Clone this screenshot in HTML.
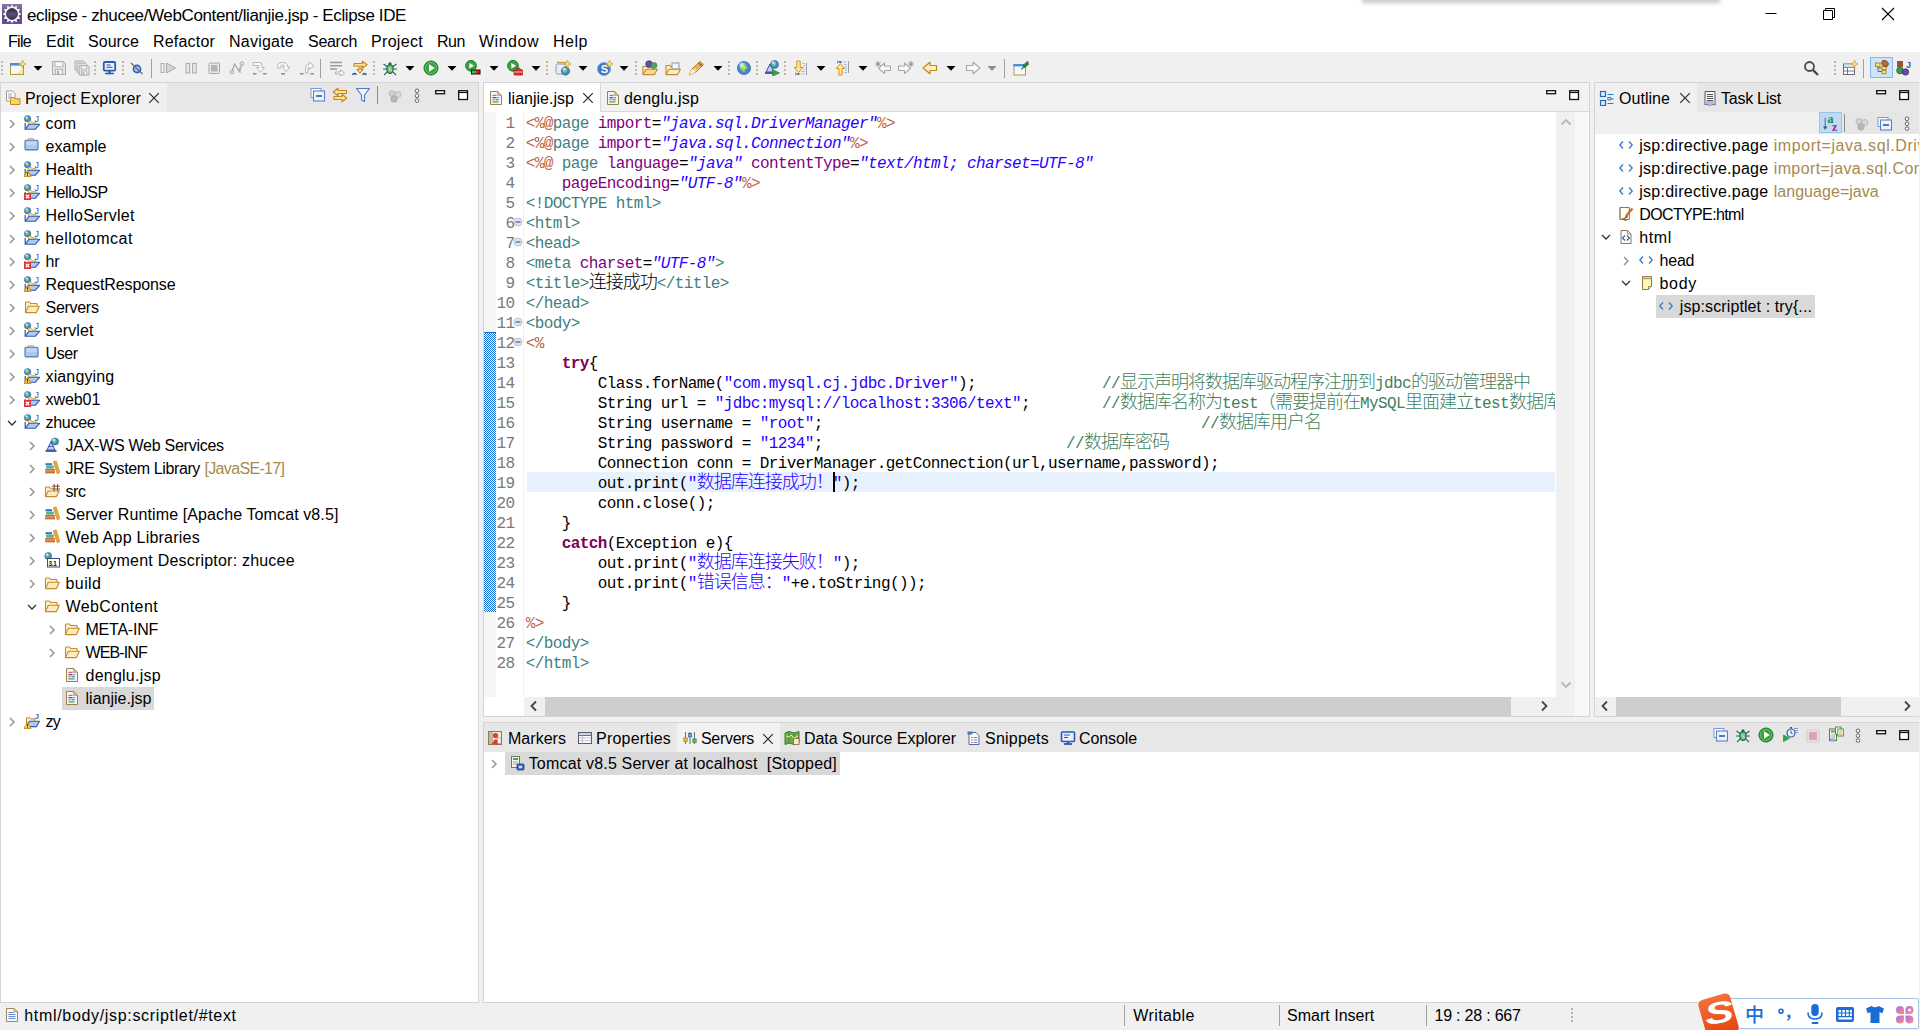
<!DOCTYPE html>
<html lang="zh"><head><meta charset="utf-8"><title>eclipse - zhucee/WebContent/lianjie.jsp - Eclipse IDE</title>
<style>

html,body{margin:0;padding:0}
body{width:1920px;height:1030px;overflow:hidden;position:relative;background:#f0f0f0;font-family:"Liberation Sans","Noto Sans CJK SC",sans-serif;color:#000}
.t{position:absolute;white-space:pre;line-height:20px;height:20px;color:#000}
.code{position:absolute;left:527px;top:113px;margin:0;font-family:"Liberation Mono","Noto Sans CJK SC",monospace;font-size:16px;letter-spacing:-0.6px;line-height:20px;white-space:pre;color:#000}
.code i{font-style:italic;color:#2a00ff}
.code .d{color:#bf5f3f}.code .g{color:#3f7f7f}.code .a{color:#7f007f}.code .s{color:#2a00ff}
.code .k{color:#7f0055;font-weight:bold}.code .c{color:#3f7f5f}.code .z{font-size:18px;line-height:1px;letter-spacing:-1px;font-weight:300;position:relative;top:-0.5px}
.code div{height:20px}
.ln{position:absolute;left:484px;top:114px;width:30.6px;text-align:right;font-family:"Liberation Mono",monospace;font-size:16px;letter-spacing:-0.6px;line-height:20px;color:#787878}
.ln div{height:20px}

</style></head>
<body>
<div style="position:absolute;left:0px;top:0px;width:1920px;height:52px;background:#fff;"></div>
<div style="position:absolute;left:0px;top:52px;width:1920px;height:31px;background:#f0f0f0;"></div>
<div style="position:absolute;left:1363px;top:-2px;width:356px;height:4px;background:#d4d4d4;box-shadow:0 0 4px 1px rgba(0,0,0,.22)"></div>
<svg style="position:absolute;left:2px;top:4px" width="20" height="20" viewBox="0 0 20 20"><defs><linearGradient id="lg" x1="0" y1="0" x2="0" y2="1"><stop offset="0" stop-color="#8a78a8"/><stop offset=".5" stop-color="#5a4888"/><stop offset="1" stop-color="#6a48a8"/></linearGradient><linearGradient id="lg2" x1="0" y1="0" x2="0" y2="1"><stop offset="0" stop-color="#2a2840"/><stop offset=".5" stop-color="#5a5080"/><stop offset="1" stop-color="#3a3058"/></linearGradient></defs><rect width="20" height="20" fill="url(#lg)"/><path d="M10.00 0.40L11.79 3.34L14.80 1.69L14.88 5.12L18.31 5.20L16.66 8.21L19.60 10.00L16.66 11.79L18.31 14.80L14.88 14.88L14.80 18.31L11.79 16.66L10.00 19.60L8.21 16.66L5.20 18.31L5.12 14.88L1.69 14.80L3.34 11.79L0.40 10.00L3.34 8.21L1.69 5.20L5.12 5.12L5.20 1.69L8.21 3.34z" fill="#f4f4f4"/><circle cx="10" cy="10" r="5.4" fill="url(#lg2)" stroke="#2a2838" stroke-width=".9"/></svg>
<span class="t" id="t0" style="left:27px;top:5.5px;font-size:17px;letter-spacing:-0.385px;">eclipse - zhucee/WebContent/lianjie.jsp - Eclipse IDE</span>
<span class="t" id="t1" style="left:8px;top:32px;font-size:16px;letter-spacing:-0.695px;">File</span>
<span class="t" id="t2" style="left:46px;top:32px;font-size:16px;letter-spacing:0.105px;">Edit</span>
<span class="t" id="t3" style="left:88px;top:32px;font-size:16px;letter-spacing:0.049px;">Source</span>
<span class="t" id="t4" style="left:153px;top:32px;font-size:16px;letter-spacing:0.191px;">Refactor</span>
<span class="t" id="t5" style="left:229px;top:32px;font-size:16px;letter-spacing:0.230px;">Navigate</span>
<span class="t" id="t6" style="left:308px;top:32px;font-size:16px;letter-spacing:-0.284px;">Search</span>
<span class="t" id="t7" style="left:371px;top:32px;font-size:16px;letter-spacing:0.315px;">Project</span>
<span class="t" id="t8" style="left:437px;top:32px;font-size:16px;letter-spacing:-0.453px;">Run</span>
<span class="t" id="t9" style="left:479px;top:32px;font-size:16px;letter-spacing:0.516px;">Window</span>
<span class="t" id="t10" style="left:553px;top:32px;font-size:16px;letter-spacing:0.523px;">Help</span>
<svg style="position:absolute;left:1760px;top:4px" width="150" height="22" viewBox="0 0 150 22"><g fill="none" stroke="#000" stroke-width="1"><path d="M5.5 9.5h11"/><path d="M63.5 6.5h9v9h-9z"/><path d="M65.5 6.500v-2h9v9h-2"/><path d="M122 4l12 12M134 4l-12 12" stroke-width="1.1"/></g></svg>
<div style="position:absolute;left:1px;top:61px;width:2px;height:16px;background:transparent;background-image:linear-gradient(#c6b89e 50%,transparent 50%);background-size:2px 4px"></div>
<div style="position:absolute;left:94px;top:61px;width:2px;height:16px;background:transparent;background-image:linear-gradient(#c6b89e 50%,transparent 50%);background-size:2px 4px"></div>
<div style="position:absolute;left:122px;top:61px;width:2px;height:16px;background:transparent;background-image:linear-gradient(#c6b89e 50%,transparent 50%);background-size:2px 4px"></div>
<div style="position:absolute;left:373px;top:61px;width:2px;height:16px;background:transparent;background-image:linear-gradient(#c6b89e 50%,transparent 50%);background-size:2px 4px"></div>
<div style="position:absolute;left:546px;top:61px;width:2px;height:16px;background:transparent;background-image:linear-gradient(#c6b89e 50%,transparent 50%);background-size:2px 4px"></div>
<div style="position:absolute;left:635px;top:61px;width:2px;height:16px;background:transparent;background-image:linear-gradient(#c6b89e 50%,transparent 50%);background-size:2px 4px"></div>
<div style="position:absolute;left:728px;top:61px;width:2px;height:16px;background:transparent;background-image:linear-gradient(#c6b89e 50%,transparent 50%);background-size:2px 4px"></div>
<div style="position:absolute;left:756px;top:61px;width:2px;height:16px;background:transparent;background-image:linear-gradient(#c6b89e 50%,transparent 50%);background-size:2px 4px"></div>
<div style="position:absolute;left:784px;top:61px;width:2px;height:16px;background:transparent;background-image:linear-gradient(#c6b89e 50%,transparent 50%);background-size:2px 4px"></div>
<div style="position:absolute;left:1834px;top:61px;width:2px;height:16px;background:transparent;background-image:linear-gradient(#c6b89e 50%,transparent 50%);background-size:2px 4px"></div>
<div style="position:absolute;left:151px;top:59px;width:1px;height:19px;background:#a0a0a0;"></div>
<div style="position:absolute;left:320px;top:59px;width:1px;height:19px;background:#a0a0a0;"></div>
<div style="position:absolute;left:1004px;top:59px;width:1px;height:19px;background:#a0a0a0;"></div>
<div style="position:absolute;left:1863px;top:59px;width:1px;height:19px;background:#a0a0a0;"></div>
<svg style="position:absolute;left:10px;top:60px" width="16" height="16" viewBox="0 0 16 16"><rect x="0.5" y="3.500" width="13" height="11" fill="#f4f9ff" stroke="#b8963c" stroke-width="1"/><rect x="0" y="3" width="14" height="2.600" fill="#4a90d8"/><path d="M2 14q9-1 11-8v8z" fill="#f6e6a8"/><path d="M12.5 0l1.1 2.9 2.9 1.1-2.9 1.1-1.1 2.9-1.1-2.9-2.9-1.1 2.9-1.1z" fill="#fbe27a" stroke="#c89a20" stroke-width=".7" stroke-linejoin="round"/></svg>
<svg style="position:absolute;left:51px;top:60px" width="16" height="16" viewBox="0 0 16 16"><path d="M1.5 1.5h11l2 2v11h-13z" fill="#e4e4e4" stroke="#a8a8a8" stroke-width="1"/><rect x="4" y="1.8" width="8" height="5" fill="#f6f6f6" stroke="#a8a8a8" stroke-width=".8"/><rect x="4.5" y="9.5" width="7" height="5" fill="#f0f0f0" stroke="#a8a8a8" stroke-width=".8"/><rect x="6" y="11" width="2" height="3" fill="#a8a8a8"/></svg>
<svg style="position:absolute;left:74px;top:60px" width="16" height="16" viewBox="0 0 16 16"><path d="M1 1h8.5l1.5 1.5V10H1z" fill="#e4e4e4" stroke="#a8a8a8" stroke-width=".9"/><path d="M3 3.2h8.5L13 4.7v7.5H3z" fill="#e4e4e4" stroke="#a8a8a8" stroke-width=".9"/><path d="M5.2 5.5h8.3L15 7v8H5.2z" fill="#e4e4e4" stroke="#a8a8a8" stroke-width=".9"/><rect x="7.2" y="5.8" width="5.5" height="3.2" fill="#f6f6f6" stroke="#a8a8a8" stroke-width=".7"/><rect x="7.5" y="11" width="5" height="4" fill="#f0f0f0" stroke="#a8a8a8" stroke-width=".7"/><rect x="8.6" y="12.2" width="1.6" height="2.6" fill="#a8a8a8"/></svg>
<svg style="position:absolute;left:102px;top:60px" width="16" height="16" viewBox="0 0 16 16"><rect x="1.800" y="2" width="11.400" height="8.600" rx="1.200" fill="#eaf2fd" stroke="#2a5ab4" stroke-width="1.800"/><path d="M4.500 5h4M4.500 7.300h6" stroke="#3a4a9a" stroke-width="1.100"/><path d="M7.500 11v2" stroke="#2a5ab4" stroke-width="2.200"/><path d="M3.200 13.500h8.600" stroke="#2a5ab4" stroke-width="1.600"/></svg>
<svg style="position:absolute;left:130px;top:60px" width="16" height="16" viewBox="0 0 16 16"><circle cx="7" cy="9" r="3.6" fill="#a9c4ec" stroke="#2a62b8" stroke-width="1.6"/><path d="M1 3l11.5 11" stroke="#6a6a6a" stroke-width="1.2"/></svg>
<svg style="position:absolute;left:160px;top:60px" width="16" height="16" viewBox="0 0 16 16"><rect x="1" y="3.5" width="3" height="9" fill="#f0f0f0" stroke="#a8a8a8" stroke-width="1"/><path d="M6.5 3l9 5-9 5z" fill="#d4d4d4" stroke="#a8a8a8" stroke-width="1"/></svg>
<svg style="position:absolute;left:184px;top:60px" width="16" height="16" viewBox="0 0 16 16"><rect x="2" y="3.5" width="3.6" height="9.5" fill="#e8e8e8" stroke="#a8a8a8" stroke-width="1"/><rect x="8.6" y="3.5" width="3.6" height="9.5" fill="#e8e8e8" stroke="#a8a8a8" stroke-width="1"/></svg>
<svg style="position:absolute;left:207px;top:60px" width="16" height="16" viewBox="0 0 16 16"><rect x="2" y="3" width="10.5" height="10.5" rx="1" fill="#e8e8e8" stroke="#a8a8a8" stroke-width="1"/><rect x="4" y="5" width="6.5" height="6.5" fill="#b4b4b4"/></svg>
<svg style="position:absolute;left:229px;top:60px" width="16" height="16" viewBox="0 0 16 16"><path d="M3 12L5.5 4l4.5 7 3.5-7" fill="none" stroke="#a8a8a8" stroke-width="1.3"/><circle cx="3" cy="12" r="1.8" fill="#e4e4e4" stroke="#a8a8a8" stroke-width="1"/><circle cx="13" cy="3.5" r="1.8" fill="#e4e4e4" stroke="#a8a8a8" stroke-width="1"/><path d="M11 7v6" stroke="#a8a8a8" stroke-width="1.2"/></svg>
<svg style="position:absolute;left:252px;top:60px" width="16" height="16" viewBox="0 0 16 16"><path d="M1 2.500h6.500q2.500 0 2.500 2.500v2.500h2.500L8.500 12.300 4.500 7.500H7V5.500H1z" fill="#fafafa" stroke="#b0b0b0" stroke-width=".9" stroke-linejoin="round"/><path d="M1 13.800h3.500M11 13.800h3.500" stroke="#8c8c8c" stroke-width="1.500"/></svg>
<svg style="position:absolute;left:275.5px;top:60px" width="16" height="16" viewBox="0 0 16 16"><path d="M1.500 8V6.500q0-4 5-4t5 4V7h2.500L10 11.500 6.200 7h2.400v-.5q0-1.500-2.100-1.500t-2.100 1.500V8z" fill="#fafafa" stroke="#b0b0b0" stroke-width=".9" stroke-linejoin="round"/><path d="M5 13.800h4" stroke="#8c8c8c" stroke-width="1.500"/></svg>
<svg style="position:absolute;left:298.5px;top:60px" width="16" height="16" viewBox="0 0 16 16"><path d="M6.500 13V8q0-3.500 3.500-3.500V2L15 5.800 10 9.500V7.300q-1 0-1 1V13z" fill="#fafafa" stroke="#b0b0b0" stroke-width=".9" stroke-linejoin="round"/><path d="M1 13.800h3.500M11.500 13.800h3.500" stroke="#8c8c8c" stroke-width="1.500"/></svg>
<svg style="position:absolute;left:329px;top:60px" width="16" height="16" viewBox="0 0 16 16"><path d="M1 2.5h12M1 5.8h12M1 9h7" stroke="#9a9a9a" stroke-width="1.6"/><path d="M6.5 12h5V9.8l4 3.4-4 3.3V14h-5z" fill="#fafafa" stroke="#a8a8a8" stroke-width=".9"/></svg>
<svg style="position:absolute;left:352px;top:60px" width="16" height="16" viewBox="0 0 16 16"><path d="M2 3.5h8.5V1.2L15 4.8l-4.5 3.4V6H9v3.5h2L8 13 5 9.5h2V6H2z" fill="#fbe39a" stroke="#c8861a" stroke-width="1.1" stroke-linejoin="round"/><path d="M0.5 14.8q2-2.5 4 0M10.5 14.8q2-2.5 4 0" stroke="#2a4a9a" stroke-width="1.4" fill="none"/></svg>
<svg style="position:absolute;left:382px;top:60px" width="16" height="16" viewBox="0 0 16 16"><ellipse cx="8" cy="9" rx="3.2" ry="4.4" fill="#8ac070" stroke="#1a6a5a" stroke-width="1.2"/><circle cx="8" cy="3.8" r="1.6" fill="#1a6a5a"/><path d="M5 6.5L1.5 4M11 6.5L14.5 4M4.8 9H1M11.2 9H15M5.2 11.8L2 15M10.8 11.8L14 15" stroke="#1a6a5a" stroke-width="1.1"/><path d="M6.5 7.5l3 3.5" stroke="#d8f0c8" stroke-width="1"/></svg>
<svg style="position:absolute;left:423px;top:60px" width="16" height="16" viewBox="0 0 16 16"><circle cx="8" cy="8" r="7" fill="#3aa040" stroke="#1a7028" stroke-width="1"/><circle cx="8" cy="8" r="5.6" fill="none" stroke="#7ad07a" stroke-width=".9" opacity=".8"/><path d="M6 4.2L11.8 8 6 11.8z" fill="#fff"/></svg>
<svg style="position:absolute;left:464.5px;top:60px" width="16" height="16" viewBox="0 0 16 16"><circle cx="6" cy="5.8" r="5.4" fill="#3aa040" stroke="#1a7028" stroke-width=".9"/><path d="M4.4 3L9 5.8 4.4 8.6z" fill="#fff"/><rect x="6" y="9.5" width="9.5" height="5" fill="#111"/><rect x="7" y="10.5" width="4" height="3" fill="#20d030"/><rect x="11" y="10.500" width="3.6" height="3" fill="#e01818"/></svg>
<svg style="position:absolute;left:507px;top:60px" width="16" height="16" viewBox="0 0 16 16"><circle cx="6" cy="5.8" r="5.4" fill="#3aa040" stroke="#1a7028" stroke-width=".9"/><path d="M4.4 3L9 5.8 4.4 8.6z" fill="#fff"/><rect x="7" y="9.800" width="8.8" height="5.200" rx=".8" fill="#e03030" stroke="#a01818" stroke-width=".8"/><path d="M9.8 9.700V8.300h3.200v1.400" fill="none" stroke="#a01818" stroke-width="1"/><path d="M7 12h8.800" stroke="#ffd0d0" stroke-width=".8"/></svg>
<svg style="position:absolute;left:555px;top:60px" width="16" height="16" viewBox="0 0 16 16"><rect x="1" y="4" width="10" height="10" rx="1.5" fill="#e8eef8" stroke="#8a9ab8" stroke-width="1"/><path d="M2 2.5h9" stroke="#c8a040" stroke-width="1.4"/><circle cx="10.5" cy="11" r="4.2" fill="#3f86d6" stroke="#2b5fa8" stroke-width=".6"/><path d="M7.5600000000000005 10.16q2.1 -3.7800000000000002 4.2 -1.6800000000000002q1.26 2.52 -0.8400000000000001 3.7800000000000002q-2.1 2.1 -3.3600000000000003 -2.1z" fill="#7fd05a"/><circle cx="9.03" cy="9.11" r="1.47" fill="#d8efff" opacity=".8"/><path d="M12.5 0l1.1 2.9 2.9 1.1-2.9 1.1-1.1 2.9-1.1-2.9-2.9-1.1 2.9-1.1z" fill="#fbe27a" stroke="#c89a20" stroke-width=".7" stroke-linejoin="round"/></svg>
<svg style="position:absolute;left:596.5px;top:60px" width="16" height="16" viewBox="0 0 16 16"><circle cx="7" cy="9" r="6.5" fill="#3a78c8" stroke="#7aa8e0" stroke-width="1"/><text x="3.8" y="13" font-family="Liberation Sans,sans-serif" font-size="11" font-weight="bold" fill="#fff">S</text><path d="M12.5 0l1.1 2.9 2.9 1.1-2.9 1.1-1.1 2.9-1.1-2.9-2.9-1.1 2.9-1.1z" fill="#fbe27a" stroke="#c89a20" stroke-width=".7" stroke-linejoin="round"/></svg>
<svg style="position:absolute;left:642px;top:60px" width="16" height="16" viewBox="0 0 16 16"><path d="M1 14.5V6.5h4l1 1.2h5v2" fill="#fdf0c8" stroke="#c58a2c" stroke-width="1.1"/><path d="M1 14.6l3-5.3h11.5l-3 5.3z" fill="#fbd98a" stroke="#c58a2c" stroke-width="1.1" stroke-linejoin="round"/><circle cx="7" cy="4" r="3.3" fill="#6a4aa8" stroke="#3a2a78" stroke-width=".6"/><circle cx="12" cy="5.5" r="3" fill="#4aa868" stroke="#2a7a48" stroke-width=".6"/></svg>
<svg style="position:absolute;left:664.5px;top:60px" width="16" height="16" viewBox="0 0 16 16"><path d="M1 14.5V5.5h4l1 1.2h2" fill="#fdf0c8" stroke="#c58a2c" stroke-width="1.1"/><rect x="7" y="3" width="7" height="6" fill="#f4f6fc" stroke="#7a8ab8" stroke-width=".9"/><path d="M1 14.6l3-5.3h11.5l-3 5.3z" fill="#fdecbd" stroke="#c58a2c" stroke-width="1.1" stroke-linejoin="round"/></svg>
<svg style="position:absolute;left:688px;top:60px" width="16" height="16" viewBox="0 0 16 16"><path d="M1 15l3-6L12 1.5l3.5 3L8 12z" fill="#f0b060" stroke="#b87820" stroke-width=".9" stroke-linejoin="round"/><path d="M1 15l3-6 4 3z" fill="#fff4d0"/><path d="M10.5 3L14 6" stroke="#8a5a20" stroke-width="1.2"/><path d="M6 8.5l2.5 2.3" stroke="#fce0a0" stroke-width="1.5"/></svg>
<svg style="position:absolute;left:736px;top:60px" width="16" height="16" viewBox="0 0 16 16"><circle cx="8" cy="8" r="6.6" fill="#3f86d6" stroke="#2b5fa8" stroke-width=".6"/><path d="M3.380000000000001 6.68q3.3 -5.9399999999999995 6.6 -2.64q1.9799999999999998 3.9599999999999995 -1.32 5.9399999999999995q-3.3 3.3 -5.28 -3.3z" fill="#7fd05a"/><circle cx="5.69" cy="5.03" r="2.3099999999999996" fill="#d8efff" opacity=".8"/><path d="M5 9l3-3 3 3M8 6v6" stroke="#f0e070" stroke-width="1" fill="none"/></svg>
<svg style="position:absolute;left:764px;top:60px" width="16" height="16" viewBox="0 0 16 16"><path d="M1 13h9" stroke="#2a3a9a" stroke-width="1.6"/><path d="M2 12L6 4l4 8z" fill="#c3d3f2" stroke="#3a4aa8" stroke-width="1"/><circle cx="10.5" cy="4.5" r="4" fill="#3f86d6" stroke="#2b5fa8" stroke-width=".6"/><path d="M7.7 3.7q2.0 -3.6 4.0 -1.6q1.2 2.4 -0.8 3.6q-2.0 2.0 -3.2 -2.0z" fill="#7fd05a"/><circle cx="9.1" cy="2.7" r="1.4" fill="#d8efff" opacity=".8"/><path d="M8.5 9.5L15.5 13l-7 3.2z" fill="#30a848" stroke="#1a7a30" stroke-width=".6"/></svg>
<svg style="position:absolute;left:793px;top:60px" width="16" height="16" viewBox="0 0 16 16"><path d="M3.800 1h3.400v6.500h2.600L5.500 12.500 1.200 7.500h2.600z" fill="#fde7a0" stroke="#d4961c" stroke-width="1" stroke-linejoin="round"/><path d="M13.500 3v12" stroke="#9a9aa8" stroke-width="1"/><path d="M9 3.500h3M10 5.500h2M10 7.500h2M10 9.500h2M8 11.500h4M7.500 14h4.500" stroke="#a8c0ec" stroke-width="1"/><rect x="3.500" y="13.200" width="3" height="1.600" fill="#2a58b0"/><path d="M2.500 12.500v3" stroke="#9a9aa8" stroke-width="1"/></svg>
<svg style="position:absolute;left:834.5px;top:60px" width="16" height="16" viewBox="0 0 16 16"><path d="M3.800 15h3.400V8.500h2.600L5.500 3.500 1.200 8.500h2.600z" fill="#fde7a0" stroke="#d4961c" stroke-width="1" stroke-linejoin="round"/><path d="M13.500 1v12" stroke="#9a9aa8" stroke-width="1"/><path d="M7.500 2h4.500M9 4.500h3M10 6.500h2M10 8.500h2M10 10.500h2M9 12.500h3" stroke="#a8c0ec" stroke-width="1"/><rect x="3.500" y="1.200" width="3" height="1.600" fill="#2a58b0"/><path d="M2.500 0.500v3" stroke="#9a9aa8" stroke-width="1"/></svg>
<svg style="position:absolute;left:875px;top:60px" width="16" height="16" viewBox="0 0 16 16"><path d="M15.5 6h-6V3L3.5 8.3l6 5.2v-3h6z" fill="#f8f8f8" stroke="#a8a8a8" stroke-width="1.1" stroke-linejoin="round"/><path d="M3 1v6M.4 2.5l5.2 3M5.6 2.5L.4 5.5" stroke="#8a8a8a" stroke-width="1"/></svg>
<svg style="position:absolute;left:898px;top:60px" width="16" height="16" viewBox="0 0 16 16"><path d="M.5 6h6V3l6 5.3-6 5.2v-3h-6z" fill="#f8f8f8" stroke="#a8a8a8" stroke-width="1.1" stroke-linejoin="round"/><path d="M13 1v6M10.4 2.5l5.2 3M15.6 2.5l-5.2 3" stroke="#8a8a8a" stroke-width="1"/></svg>
<svg style="position:absolute;left:922px;top:60px" width="16" height="16" viewBox="0 0 16 16"><path d="M14.5 5.5H8V2.2L1 8l7 5.8v-3.3h6.5z" fill="#fdf0c4" stroke="#c8861a" stroke-width="1.2" stroke-linejoin="round"/></svg>
<svg style="position:absolute;left:965px;top:60px" width="16" height="16" viewBox="0 0 16 16"><path d="M1.5 5.5H8V2.2L15 8l-7 5.8v-3.3H1.5z" fill="#fafafa" stroke="#a8a8a8" stroke-width="1.2" stroke-linejoin="round"/></svg>
<svg style="position:absolute;left:1013px;top:60px" width="16" height="16" viewBox="0 0 16 16"><rect x="1" y="4.500" width="11.500" height="10.500" fill="#f4f9ff" stroke="#b8963c" stroke-width="1"/><rect x=".5" y="4" width="12.500" height="2.400" fill="#4a90d8"/><path d="M14.8 1.2l-4.6 4 1.2 2.5 4-3.2z" fill="#2a8a3a" stroke="#1a5a28" stroke-width=".7"/><path d="M10.8 6.5L8.5 9.5" stroke="#1a5a28" stroke-width="1.2"/></svg>
<svg style="position:absolute;left:1803px;top:60px" width="16" height="16" viewBox="0 0 16 16"><circle cx="6.5" cy="6.5" r="4.5" fill="none" stroke="#4a4a4a" stroke-width="1.8"/><path d="M9.8 9.8L15 15" stroke="#4a4a4a" stroke-width="2.4"/></svg>
<svg style="position:absolute;left:1842px;top:60px" width="16" height="16" viewBox="0 0 16 16"><rect x="1.5" y="4" width="11" height="10.5" fill="#fff" stroke="#6a6a7a" stroke-width="1"/><path d="M1.5 7.5h11M1.5 11h11M5.5 7.5v7" stroke="#6a6a7a" stroke-width=".9"/><rect x="2" y="4.5" width="10" height="2.6" fill="#d8e0f0"/><path d="M12.5 0l1.1 2.9 2.9 1.1-2.9 1.1-1.1 2.9-1.1-2.9-2.9-1.1 2.9-1.1z" fill="#fbe27a" stroke="#c89a20" stroke-width=".7" stroke-linejoin="round"/></svg>
<svg style="position:absolute;left:32.5px;top:65px" width="10" height="7" viewBox="0 0 10 7"><path d="M0.5 1h9L5 5.7z" fill="#000"/></svg>
<svg style="position:absolute;left:404.5px;top:65px" width="10" height="7" viewBox="0 0 10 7"><path d="M0.5 1h9L5 5.7z" fill="#000"/></svg>
<svg style="position:absolute;left:446.5px;top:65px" width="10" height="7" viewBox="0 0 10 7"><path d="M0.5 1h9L5 5.7z" fill="#000"/></svg>
<svg style="position:absolute;left:488.5px;top:65px" width="10" height="7" viewBox="0 0 10 7"><path d="M0.5 1h9L5 5.7z" fill="#000"/></svg>
<svg style="position:absolute;left:530.5px;top:65px" width="10" height="7" viewBox="0 0 10 7"><path d="M0.5 1h9L5 5.7z" fill="#000"/></svg>
<svg style="position:absolute;left:577.5px;top:65px" width="10" height="7" viewBox="0 0 10 7"><path d="M0.5 1h9L5 5.7z" fill="#000"/></svg>
<svg style="position:absolute;left:619px;top:65px" width="10" height="7" viewBox="0 0 10 7"><path d="M0.5 1h9L5 5.7z" fill="#000"/></svg>
<svg style="position:absolute;left:712.5px;top:65px" width="10" height="7" viewBox="0 0 10 7"><path d="M0.5 1h9L5 5.7z" fill="#000"/></svg>
<svg style="position:absolute;left:815.5px;top:65px" width="10" height="7" viewBox="0 0 10 7"><path d="M0.5 1h9L5 5.7z" fill="#000"/></svg>
<svg style="position:absolute;left:857.5px;top:65px" width="10" height="7" viewBox="0 0 10 7"><path d="M0.5 1h9L5 5.7z" fill="#000"/></svg>
<svg style="position:absolute;left:945.5px;top:65px" width="10" height="7" viewBox="0 0 10 7"><path d="M0.5 1h9L5 5.7z" fill="#000"/></svg>
<svg style="position:absolute;left:987px;top:65px" width="10" height="7" viewBox="0 0 10 7"><path d="M0.5 1h9L5 5.7z" fill="#8a8a8a"/></svg>
<div style="position:absolute;left:1870px;top:57px;width:23px;height:21px;background:#cce4f7;box-sizing:border-box;border:1px solid #84b8ea"></div>
<svg style="position:absolute;left:1873.5px;top:60px" width="16" height="16" viewBox="0 0 16 16"><path d="M4 5.5v6h4M4 8h4" stroke="#6a6a6a" stroke-width="1" fill="none"/><rect x="1.5" y="3" width="4.5" height="3.6" fill="#fbe27a" stroke="#a8861a" stroke-width=".9"/><rect x="8" y="6.4" width="4" height="3.2" fill="#fbe27a" stroke="#a8861a" stroke-width=".9"/><rect x="8" y="10.5" width="4" height="3.2" fill="#fbe27a" stroke="#a8861a" stroke-width=".9"/><ellipse cx="11" cy="3.5" rx="3.6" ry="2.8" fill="#b8683a" stroke="#7a3a1a" stroke-width=".8" transform="rotate(35 11 3.5)"/></svg>
<svg style="position:absolute;left:1896px;top:60px" width="16" height="16" viewBox="0 0 16 16"><path d="M4 1v6M1 4h6M2 2l4 4M6 2L2 6" stroke="#8a4a2a" stroke-width="1.1"/><rect x="1.5" y="1.5" width="5" height="5" fill="none" stroke="#8a4a2a" stroke-width=".9"/><circle cx="4" cy="10.5" r="3.4" fill="#3a9a4a" stroke="#1a6a2a" stroke-width=".7"/><circle cx="9.5" cy="12" r="3.2" fill="#6a4aa8" stroke="#3a2a78" stroke-width=".7"/><text x="10" y="7.5" font-family="Liberation Sans,sans-serif" font-size="9" font-weight="bold" fill="#3a5ab0">J</text></svg>
<div style="position:absolute;left:0px;top:82px;width:479px;height:921px;background:#fff;box-sizing:border-box;border:1px solid #d4d4d4"></div>
<div style="position:absolute;left:1px;top:83px;width:477px;height:29px;background:#e7e7e7;"></div>
<div style="position:absolute;left:1px;top:83px;width:166px;height:29px;background:#f0f0f0;"></div>
<div style="position:absolute;left:483px;top:82px;width:1107px;height:635px;background:#fff;box-sizing:border-box;border:1px solid #d4d4d4"></div>
<div style="position:absolute;left:484px;top:83px;width:1105px;height:29px;background:#f2f2f2;"></div>
<div style="position:absolute;left:484px;top:83px;width:116px;height:29px;background:#fff;"></div>
<div style="position:absolute;left:600px;top:83px;width:1px;height:29px;background:#d8d8d8;"></div>
<div style="position:absolute;left:600px;top:111px;width:989px;height:1px;background:#d8d8d8;"></div>
<div style="position:absolute;left:1594px;top:82px;width:331px;height:635px;background:#fff;box-sizing:border-box;border:1px solid #d4d4d4"></div>
<div style="position:absolute;left:1595px;top:83px;width:329px;height:29px;background:#e7e7e7;"></div>
<div style="position:absolute;left:1595px;top:83px;width:102px;height:29px;background:#f0f0f0;"></div>
<div style="position:absolute;left:1595px;top:112px;width:329px;height:22px;background:#f0f0f0;"></div>
<div style="position:absolute;left:483px;top:722px;width:1442px;height:281px;background:#fff;box-sizing:border-box;border:1px solid #d4d4d4"></div>
<div style="position:absolute;left:484px;top:723px;width:1440px;height:29px;background:#e7e7e7;"></div>
<div style="position:absolute;left:677px;top:723px;width:103px;height:29px;background:#f2f2f2;"></div>
<div style="position:absolute;left:0px;top:1003px;width:1920px;height:27px;background:#f0f0f0;"></div>
<span class="t" id="t11" style="left:25px;top:89px;font-size:16px;letter-spacing:0.136px;">Project Explorer</span>
<span class="t" id="t12" style="left:508px;top:89px;font-size:16px;letter-spacing:0.017px;">lianjie.jsp</span>
<span class="t" id="t13" style="left:624px;top:89px;font-size:16px;letter-spacing:0.205px;">denglu.jsp</span>
<span class="t" id="t14" style="left:1619px;top:89px;font-size:16px;letter-spacing:0.042px;">Outline</span>
<span class="t" id="t15" style="left:1721px;top:89px;font-size:16px;letter-spacing:-0.250px;">Task List</span>
<svg style="position:absolute;left:146px;top:90px" width="16" height="16" viewBox="0 0 16 16"><path d="M3.2 3.2L12.8 12.8M12.8 3.2L3.2 12.8" stroke="#222" stroke-width="1.1" fill="none"/></svg>
<svg style="position:absolute;left:579.5px;top:90px" width="16" height="16" viewBox="0 0 16 16"><path d="M3.2 3.2L12.8 12.8M12.8 3.2L3.2 12.8" stroke="#222" stroke-width="1.1" fill="none"/></svg>
<svg style="position:absolute;left:1676.5px;top:90px" width="16" height="16" viewBox="0 0 16 16"><path d="M3.2 3.2L12.8 12.8M12.8 3.2L3.2 12.8" stroke="#222" stroke-width="1.1" fill="none"/></svg>
<svg style="position:absolute;left:759.5px;top:730.5px" width="16" height="16" viewBox="0 0 16 16"><path d="M3.2 3.2L12.8 12.8M12.8 3.2L3.2 12.8" stroke="#222" stroke-width="1.1" fill="none"/></svg>
<span class="t" id="t16" style="left:508px;top:729px;font-size:16px;letter-spacing:0.031px;">Markers</span>
<span class="t" id="t17" style="left:596px;top:729px;font-size:16px;letter-spacing:0.208px;">Properties</span>
<span class="t" id="t18" style="left:701px;top:729px;font-size:16px;letter-spacing:-0.304px;">Servers</span>
<span class="t" id="t19" style="left:804px;top:729px;font-size:16px;letter-spacing:-0.048px;">Data Source Explorer</span>
<span class="t" id="t20" style="left:985px;top:729px;font-size:16px;letter-spacing:0.217px;">Snippets</span>
<span class="t" id="t21" style="left:1079px;top:729px;font-size:16px;letter-spacing:-0.100px;">Console</span>
<div style="position:absolute;left:62px;top:687px;width:92px;height:23px;background:#d9d9d9;"></div>
<svg style="position:absolute;left:7px;top:118.0px" width="10" height="12" viewBox="0 0 10 12"><path d="M3 2l4 4-4 4" fill="none" stroke="#959595" stroke-width="1.5"/></svg>
<svg style="position:absolute;left:24px;top:115px" width="16" height="16" viewBox="0 0 16 16"><circle cx="3.6" cy="3.8" r="3.2" fill="#3f86d6" stroke="#2b5fa8" stroke-width=".6"/><path d="M1.3600000000000003 3.1599999999999997q1.6 -2.8800000000000003 3.2 -1.2800000000000002q0.96 1.92 -0.6400000000000001 2.8800000000000003q-1.6 1.6 -2.5600000000000005 -1.6z" fill="#7fd05a"/><circle cx="2.4800000000000004" cy="2.3599999999999994" r="1.1199999999999999" fill="#d8efff" opacity=".8"/><text x="10.400" y="6.800" font-family="Liberation Sans,sans-serif" font-size="9" fill="#2a58a8">J</text><path d="M4.5 9.5V6.2h3l1 1.3h3.5v2" fill="#f8e08e" stroke="#c9a24a" stroke-width=".7"/><path d="M1.2 14.2V8" stroke="#3a55a5" stroke-width="1.2" fill="none"/><path d="M1.2 14.2L5 9.3h10.6l-4.2 4.9z" fill="#a9cdf4" stroke="#3a55a5" stroke-width="1.1" stroke-linejoin="round"/></svg>
<span class="t" id="t22" style="left:45.5px;top:114px;font-size:16px;letter-spacing:0.155px;">com</span>
<svg style="position:absolute;left:7px;top:141.0px" width="10" height="12" viewBox="0 0 10 12"><path d="M3 2l4 4-4 4" fill="none" stroke="#959595" stroke-width="1.5"/></svg>
<svg style="position:absolute;left:24px;top:138px" width="16" height="16" viewBox="0 0 16 16"><path d="M4 2.5V1.2q0-.6.6-.6h4.3q.6 0 .6.6v1.3" fill="#f6efd8" stroke="#9a9a8a" stroke-width=".8"/><rect x="1" y="2.3" width="13" height="9.6" rx="1.2" fill="#a9c9ee" stroke="#4f74b5" stroke-width="1.1"/><rect x="2.1" y="3.4" width="10.8" height="3.6" fill="#c9def6" opacity=".7"/></svg>
<span class="t" id="t23" style="left:45.5px;top:137px;font-size:16px;letter-spacing:0.088px;">example</span>
<svg style="position:absolute;left:7px;top:164.0px" width="10" height="12" viewBox="0 0 10 12"><path d="M3 2l4 4-4 4" fill="none" stroke="#959595" stroke-width="1.5"/></svg>
<svg style="position:absolute;left:24px;top:161px" width="16" height="16" viewBox="0 0 16 16"><circle cx="3.6" cy="3.8" r="3.2" fill="#3f86d6" stroke="#2b5fa8" stroke-width=".6"/><path d="M1.3600000000000003 3.1599999999999997q1.6 -2.8800000000000003 3.2 -1.2800000000000002q0.96 1.92 -0.6400000000000001 2.8800000000000003q-1.6 1.6 -2.5600000000000005 -1.6z" fill="#7fd05a"/><circle cx="2.4800000000000004" cy="2.3599999999999994" r="1.1199999999999999" fill="#d8efff" opacity=".8"/><text x="10.400" y="6.800" font-family="Liberation Sans,sans-serif" font-size="9" fill="#2a58a8">J</text><path d="M4.5 9.5V6.2h3l1 1.3h3.5v2" fill="#f8e08e" stroke="#c9a24a" stroke-width=".7"/><path d="M1.2 14.2V8" stroke="#3a55a5" stroke-width="1.2" fill="none"/><path d="M1.2 14.2L5 9.3h10.6l-4.2 4.9z" fill="#a9cdf4" stroke="#3a55a5" stroke-width="1.1" stroke-linejoin="round"/><path d="M3.5 9.2L7 15.5H0z" fill="#f7c948" stroke="#b8860b" stroke-width=".8" stroke-linejoin="round"/><path d="M3.5 11.2v2.2M3.5 14.2v.7" stroke="#3a2a00" stroke-width="1"/></svg>
<span class="t" id="t24" style="left:45.5px;top:160px;font-size:16px;letter-spacing:0.158px;">Health</span>
<svg style="position:absolute;left:7px;top:187.0px" width="10" height="12" viewBox="0 0 10 12"><path d="M3 2l4 4-4 4" fill="none" stroke="#959595" stroke-width="1.5"/></svg>
<svg style="position:absolute;left:24px;top:184px" width="16" height="16" viewBox="0 0 16 16"><circle cx="3.6" cy="3.8" r="3.2" fill="#3f86d6" stroke="#2b5fa8" stroke-width=".6"/><path d="M1.3600000000000003 3.1599999999999997q1.6 -2.8800000000000003 3.2 -1.2800000000000002q0.96 1.92 -0.6400000000000001 2.8800000000000003q-1.6 1.6 -2.5600000000000005 -1.6z" fill="#7fd05a"/><circle cx="2.4800000000000004" cy="2.3599999999999994" r="1.1199999999999999" fill="#d8efff" opacity=".8"/><text x="10.400" y="6.800" font-family="Liberation Sans,sans-serif" font-size="9" fill="#2a58a8">J</text><path d="M4.5 9.5V6.2h3l1 1.3h3.5v2" fill="#f8e08e" stroke="#c9a24a" stroke-width=".7"/><path d="M1.2 14.2V8" stroke="#3a55a5" stroke-width="1.2" fill="none"/><path d="M1.2 14.2L5 9.3h10.6l-4.2 4.9z" fill="#a9cdf4" stroke="#3a55a5" stroke-width="1.1" stroke-linejoin="round"/><rect x="0" y="9" width="7" height="7" fill="#e0323c"/><path d="M1.8 10.8l3.4 3.4M5.2 10.8l-3.4 3.4" stroke="#fff" stroke-width="1.3"/></svg>
<span class="t" id="t25" style="left:45.5px;top:183px;font-size:16px;letter-spacing:-0.452px;">HelloJSP</span>
<svg style="position:absolute;left:7px;top:210.0px" width="10" height="12" viewBox="0 0 10 12"><path d="M3 2l4 4-4 4" fill="none" stroke="#959595" stroke-width="1.5"/></svg>
<svg style="position:absolute;left:24px;top:207px" width="16" height="16" viewBox="0 0 16 16"><circle cx="3.6" cy="3.8" r="3.2" fill="#3f86d6" stroke="#2b5fa8" stroke-width=".6"/><path d="M1.3600000000000003 3.1599999999999997q1.6 -2.8800000000000003 3.2 -1.2800000000000002q0.96 1.92 -0.6400000000000001 2.8800000000000003q-1.6 1.6 -2.5600000000000005 -1.6z" fill="#7fd05a"/><circle cx="2.4800000000000004" cy="2.3599999999999994" r="1.1199999999999999" fill="#d8efff" opacity=".8"/><text x="10.400" y="6.800" font-family="Liberation Sans,sans-serif" font-size="9" fill="#2a58a8">J</text><path d="M4.5 9.5V6.2h3l1 1.3h3.5v2" fill="#f8e08e" stroke="#c9a24a" stroke-width=".7"/><path d="M1.2 14.2V8" stroke="#3a55a5" stroke-width="1.2" fill="none"/><path d="M1.2 14.2L5 9.3h10.6l-4.2 4.9z" fill="#a9cdf4" stroke="#3a55a5" stroke-width="1.1" stroke-linejoin="round"/></svg>
<span class="t" id="t26" style="left:45.5px;top:206px;font-size:16px;letter-spacing:0.236px;">HelloServlet</span>
<svg style="position:absolute;left:7px;top:233.0px" width="10" height="12" viewBox="0 0 10 12"><path d="M3 2l4 4-4 4" fill="none" stroke="#959595" stroke-width="1.5"/></svg>
<svg style="position:absolute;left:24px;top:230px" width="16" height="16" viewBox="0 0 16 16"><circle cx="3.6" cy="3.8" r="3.2" fill="#3f86d6" stroke="#2b5fa8" stroke-width=".6"/><path d="M1.3600000000000003 3.1599999999999997q1.6 -2.8800000000000003 3.2 -1.2800000000000002q0.96 1.92 -0.6400000000000001 2.8800000000000003q-1.6 1.6 -2.5600000000000005 -1.6z" fill="#7fd05a"/><circle cx="2.4800000000000004" cy="2.3599999999999994" r="1.1199999999999999" fill="#d8efff" opacity=".8"/><text x="10.400" y="6.800" font-family="Liberation Sans,sans-serif" font-size="9" fill="#2a58a8">J</text><path d="M4.5 9.5V6.2h3l1 1.3h3.5v2" fill="#f8e08e" stroke="#c9a24a" stroke-width=".7"/><path d="M1.2 14.2V8" stroke="#3a55a5" stroke-width="1.2" fill="none"/><path d="M1.2 14.2L5 9.3h10.6l-4.2 4.9z" fill="#a9cdf4" stroke="#3a55a5" stroke-width="1.1" stroke-linejoin="round"/></svg>
<span class="t" id="t27" style="left:45.5px;top:229px;font-size:16px;letter-spacing:0.507px;">hellotomcat</span>
<svg style="position:absolute;left:7px;top:256.0px" width="10" height="12" viewBox="0 0 10 12"><path d="M3 2l4 4-4 4" fill="none" stroke="#959595" stroke-width="1.5"/></svg>
<svg style="position:absolute;left:24px;top:253px" width="16" height="16" viewBox="0 0 16 16"><circle cx="3.6" cy="3.8" r="3.2" fill="#3f86d6" stroke="#2b5fa8" stroke-width=".6"/><path d="M1.3600000000000003 3.1599999999999997q1.6 -2.8800000000000003 3.2 -1.2800000000000002q0.96 1.92 -0.6400000000000001 2.8800000000000003q-1.6 1.6 -2.5600000000000005 -1.6z" fill="#7fd05a"/><circle cx="2.4800000000000004" cy="2.3599999999999994" r="1.1199999999999999" fill="#d8efff" opacity=".8"/><text x="10.400" y="6.800" font-family="Liberation Sans,sans-serif" font-size="9" fill="#2a58a8">J</text><path d="M4.5 9.5V6.2h3l1 1.3h3.5v2" fill="#f8e08e" stroke="#c9a24a" stroke-width=".7"/><path d="M1.2 14.2V8" stroke="#3a55a5" stroke-width="1.2" fill="none"/><path d="M1.2 14.2L5 9.3h10.6l-4.2 4.9z" fill="#a9cdf4" stroke="#3a55a5" stroke-width="1.1" stroke-linejoin="round"/><rect x="0" y="9" width="7" height="7" fill="#e0323c"/><path d="M1.8 10.8l3.4 3.4M5.2 10.8l-3.4 3.4" stroke="#fff" stroke-width="1.3"/></svg>
<span class="t" id="t28" style="left:45.5px;top:252px;font-size:16px;letter-spacing:-0.167px;">hr</span>
<svg style="position:absolute;left:7px;top:279.0px" width="10" height="12" viewBox="0 0 10 12"><path d="M3 2l4 4-4 4" fill="none" stroke="#959595" stroke-width="1.5"/></svg>
<svg style="position:absolute;left:24px;top:276px" width="16" height="16" viewBox="0 0 16 16"><circle cx="3.6" cy="3.8" r="3.2" fill="#3f86d6" stroke="#2b5fa8" stroke-width=".6"/><path d="M1.3600000000000003 3.1599999999999997q1.6 -2.8800000000000003 3.2 -1.2800000000000002q0.96 1.92 -0.6400000000000001 2.8800000000000003q-1.6 1.6 -2.5600000000000005 -1.6z" fill="#7fd05a"/><circle cx="2.4800000000000004" cy="2.3599999999999994" r="1.1199999999999999" fill="#d8efff" opacity=".8"/><text x="10.400" y="6.800" font-family="Liberation Sans,sans-serif" font-size="9" fill="#2a58a8">J</text><path d="M4.5 9.5V6.2h3l1 1.3h3.5v2" fill="#f8e08e" stroke="#c9a24a" stroke-width=".7"/><path d="M1.2 14.2V8" stroke="#3a55a5" stroke-width="1.2" fill="none"/><path d="M1.2 14.2L5 9.3h10.6l-4.2 4.9z" fill="#a9cdf4" stroke="#3a55a5" stroke-width="1.1" stroke-linejoin="round"/><path d="M3.5 9.2L7 15.5H0z" fill="#f7c948" stroke="#b8860b" stroke-width=".8" stroke-linejoin="round"/><path d="M3.5 11.2v2.2M3.5 14.2v.7" stroke="#3a2a00" stroke-width="1"/></svg>
<span class="t" id="t29" style="left:45.5px;top:275px;font-size:16px;letter-spacing:-0.109px;">RequestResponse</span>
<svg style="position:absolute;left:7px;top:302.0px" width="10" height="12" viewBox="0 0 10 12"><path d="M3 2l4 4-4 4" fill="none" stroke="#959595" stroke-width="1.5"/></svg>
<svg style="position:absolute;left:24px;top:299px" width="16" height="16" viewBox="0 0 16 16"><path d="M1.5 13.5V3.8q0-.8.8-.8h3.2l1.2 1.5h5.6q.8 0 .8.8v1.9" fill="#fdf0c8" stroke="#c58a2c" stroke-width="1.1" stroke-linejoin="round"/><path d="M1.5 13.6L4.3 7.3h11l-2.9 6.3z" fill="#fdecbd" stroke="#c58a2c" stroke-width="1.1" stroke-linejoin="round"/></svg>
<span class="t" id="t30" style="left:45.5px;top:298px;font-size:16px;letter-spacing:-0.289px;">Servers</span>
<svg style="position:absolute;left:7px;top:325.0px" width="10" height="12" viewBox="0 0 10 12"><path d="M3 2l4 4-4 4" fill="none" stroke="#959595" stroke-width="1.5"/></svg>
<svg style="position:absolute;left:24px;top:322px" width="16" height="16" viewBox="0 0 16 16"><circle cx="3.6" cy="3.8" r="3.2" fill="#3f86d6" stroke="#2b5fa8" stroke-width=".6"/><path d="M1.3600000000000003 3.1599999999999997q1.6 -2.8800000000000003 3.2 -1.2800000000000002q0.96 1.92 -0.6400000000000001 2.8800000000000003q-1.6 1.6 -2.5600000000000005 -1.6z" fill="#7fd05a"/><circle cx="2.4800000000000004" cy="2.3599999999999994" r="1.1199999999999999" fill="#d8efff" opacity=".8"/><text x="10.400" y="6.800" font-family="Liberation Sans,sans-serif" font-size="9" fill="#2a58a8">J</text><path d="M4.5 9.5V6.2h3l1 1.3h3.5v2" fill="#f8e08e" stroke="#c9a24a" stroke-width=".7"/><path d="M1.2 14.2V8" stroke="#3a55a5" stroke-width="1.2" fill="none"/><path d="M1.2 14.2L5 9.3h10.6l-4.2 4.9z" fill="#a9cdf4" stroke="#3a55a5" stroke-width="1.1" stroke-linejoin="round"/></svg>
<span class="t" id="t31" style="left:45.5px;top:321px;font-size:16px;letter-spacing:0.154px;">servlet</span>
<svg style="position:absolute;left:7px;top:348.0px" width="10" height="12" viewBox="0 0 10 12"><path d="M3 2l4 4-4 4" fill="none" stroke="#959595" stroke-width="1.5"/></svg>
<svg style="position:absolute;left:24px;top:345px" width="16" height="16" viewBox="0 0 16 16"><path d="M4 2.5V1.2q0-.6.6-.6h4.3q.6 0 .6.6v1.3" fill="#f6efd8" stroke="#9a9a8a" stroke-width=".8"/><rect x="1" y="2.3" width="13" height="9.6" rx="1.2" fill="#a9c9ee" stroke="#4f74b5" stroke-width="1.1"/><rect x="2.1" y="3.4" width="10.8" height="3.6" fill="#c9def6" opacity=".7"/></svg>
<span class="t" id="t32" style="left:45.5px;top:344px;font-size:16px;letter-spacing:-0.420px;">User</span>
<svg style="position:absolute;left:7px;top:371.0px" width="10" height="12" viewBox="0 0 10 12"><path d="M3 2l4 4-4 4" fill="none" stroke="#959595" stroke-width="1.5"/></svg>
<svg style="position:absolute;left:24px;top:368px" width="16" height="16" viewBox="0 0 16 16"><circle cx="3.6" cy="3.8" r="3.2" fill="#3f86d6" stroke="#2b5fa8" stroke-width=".6"/><path d="M1.3600000000000003 3.1599999999999997q1.6 -2.8800000000000003 3.2 -1.2800000000000002q0.96 1.92 -0.6400000000000001 2.8800000000000003q-1.6 1.6 -2.5600000000000005 -1.6z" fill="#7fd05a"/><circle cx="2.4800000000000004" cy="2.3599999999999994" r="1.1199999999999999" fill="#d8efff" opacity=".8"/><text x="10.400" y="6.800" font-family="Liberation Sans,sans-serif" font-size="9" fill="#2a58a8">J</text><path d="M4.5 9.5V6.2h3l1 1.3h3.5v2" fill="#f8e08e" stroke="#c9a24a" stroke-width=".7"/><path d="M1.2 14.2V8" stroke="#3a55a5" stroke-width="1.2" fill="none"/><path d="M1.2 14.2L5 9.3h10.6l-4.2 4.9z" fill="#a9cdf4" stroke="#3a55a5" stroke-width="1.1" stroke-linejoin="round"/><path d="M3.5 9.2L7 15.5H0z" fill="#f7c948" stroke="#b8860b" stroke-width=".8" stroke-linejoin="round"/><path d="M3.5 11.2v2.2M3.5 14.2v.7" stroke="#3a2a00" stroke-width="1"/></svg>
<span class="t" id="t33" style="left:45.5px;top:367px;font-size:16px;letter-spacing:0.132px;">xiangying</span>
<svg style="position:absolute;left:7px;top:394.0px" width="10" height="12" viewBox="0 0 10 12"><path d="M3 2l4 4-4 4" fill="none" stroke="#959595" stroke-width="1.5"/></svg>
<svg style="position:absolute;left:24px;top:391px" width="16" height="16" viewBox="0 0 16 16"><circle cx="3.6" cy="3.8" r="3.2" fill="#3f86d6" stroke="#2b5fa8" stroke-width=".6"/><path d="M1.3600000000000003 3.1599999999999997q1.6 -2.8800000000000003 3.2 -1.2800000000000002q0.96 1.92 -0.6400000000000001 2.8800000000000003q-1.6 1.6 -2.5600000000000005 -1.6z" fill="#7fd05a"/><circle cx="2.4800000000000004" cy="2.3599999999999994" r="1.1199999999999999" fill="#d8efff" opacity=".8"/><text x="10.400" y="6.800" font-family="Liberation Sans,sans-serif" font-size="9" fill="#2a58a8">J</text><path d="M4.5 9.5V6.2h3l1 1.3h3.5v2" fill="#f8e08e" stroke="#c9a24a" stroke-width=".7"/><path d="M1.2 14.2V8" stroke="#3a55a5" stroke-width="1.2" fill="none"/><path d="M1.2 14.2L5 9.3h10.6l-4.2 4.9z" fill="#a9cdf4" stroke="#3a55a5" stroke-width="1.1" stroke-linejoin="round"/><rect x="0" y="9" width="7" height="7" fill="#e0323c"/><path d="M1.8 10.8l3.4 3.4M5.2 10.8l-3.4 3.4" stroke="#fff" stroke-width="1.3"/></svg>
<span class="t" id="t34" style="left:45.5px;top:390px;font-size:16px;letter-spacing:-0.059px;">xweb01</span>
<svg style="position:absolute;left:6px;top:417.5px" width="12" height="10" viewBox="0 0 12 10"><path d="M2 3l4 4 4-4" fill="none" stroke="#333" stroke-width="1.3"/></svg>
<svg style="position:absolute;left:24px;top:414px" width="16" height="16" viewBox="0 0 16 16"><circle cx="3.6" cy="3.8" r="3.2" fill="#3f86d6" stroke="#2b5fa8" stroke-width=".6"/><path d="M1.3600000000000003 3.1599999999999997q1.6 -2.8800000000000003 3.2 -1.2800000000000002q0.96 1.92 -0.6400000000000001 2.8800000000000003q-1.6 1.6 -2.5600000000000005 -1.6z" fill="#7fd05a"/><circle cx="2.4800000000000004" cy="2.3599999999999994" r="1.1199999999999999" fill="#d8efff" opacity=".8"/><text x="10.400" y="6.800" font-family="Liberation Sans,sans-serif" font-size="9" fill="#2a58a8">J</text><path d="M4.5 9.5V6.2h3l1 1.3h3.5v2" fill="#f8e08e" stroke="#c9a24a" stroke-width=".7"/><path d="M1.2 14.2V8" stroke="#3a55a5" stroke-width="1.2" fill="none"/><path d="M1.2 14.2L5 9.3h10.6l-4.2 4.9z" fill="#a9cdf4" stroke="#3a55a5" stroke-width="1.1" stroke-linejoin="round"/></svg>
<span class="t" id="t35" style="left:45.5px;top:413px;font-size:16px;letter-spacing:-0.266px;">zhucee</span>
<svg style="position:absolute;left:27px;top:440.0px" width="10" height="12" viewBox="0 0 10 12"><path d="M3 2l4 4-4 4" fill="none" stroke="#959595" stroke-width="1.5"/></svg>
<svg style="position:absolute;left:44px;top:437px" width="16" height="16" viewBox="0 0 16 16"><path d="M1.5 14h11" stroke="#2a3a9a" stroke-width="1.6"/><path d="M3 13L7 4.5 11 13z" fill="#c3d3f2" stroke="#3a4aa8" stroke-width="1"/><path d="M5 9.5h4" stroke="#3a4aa8" stroke-width=".8"/><circle cx="11" cy="4.5" r="3.6" fill="#3f86d6" stroke="#2b5fa8" stroke-width=".6"/><path d="M8.48 3.78q1.8 -3.24 3.6 -1.4400000000000002q1.08 2.16 -0.7200000000000001 3.24q-1.8 1.8 -2.8800000000000003 -1.8z" fill="#7fd05a"/><circle cx="9.74" cy="2.88" r="1.26" fill="#d8efff" opacity=".8"/></svg>
<span class="t" id="t36" style="left:65.5px;top:436px;font-size:16px;letter-spacing:-0.263px;">JAX-WS Web Services</span>
<svg style="position:absolute;left:27px;top:463.0px" width="10" height="12" viewBox="0 0 10 12"><path d="M3 2l4 4-4 4" fill="none" stroke="#959595" stroke-width="1.5"/></svg>
<svg style="position:absolute;left:44px;top:460px" width="16" height="16" viewBox="0 0 16 16"><rect x="1.5" y="3.2" width="6.5" height="2" fill="#2f72c0"/><rect x="2.2" y="5.6" width="7.5" height="3" fill="#3f9a78"/><rect x="2.2" y="6.6" width="7.5" height=".8" fill="#8fd0b0"/><rect x="1.2" y="9" width="9.8" height="4.4" fill="#c4713a"/><rect x="1.2" y="10.4" width="9.8" height="1" fill="#e9a77a"/><path d="M9.3 1.8l2.9-1 3.8 12-2.9 1z" fill="#eaa53c" stroke="#c07a1c" stroke-width=".5"/></svg>
<span class="t" id="t37" style="left:65.5px;top:459px;font-size:16px;letter-spacing:-0.382px;">JRE System Library</span>
<svg style="position:absolute;left:27px;top:486.0px" width="10" height="12" viewBox="0 0 10 12"><path d="M3 2l4 4-4 4" fill="none" stroke="#959595" stroke-width="1.5"/></svg>
<svg style="position:absolute;left:44px;top:483px" width="16" height="16" viewBox="0 0 16 16"><path d="M1.5 13.5V4.8q0-.8.8-.8h3l1 1.3h2" fill="#fdf0c8" stroke="#c58a2c" stroke-width="1.1"/><path d="M1.5 13.6L4.3 8h11l-2.9 5.6z" fill="#fdecbd" stroke="#c58a2c" stroke-width="1.1" stroke-linejoin="round"/><path d="M8 3.2h8M8 6h8M10.2 1v7M13.6 1v7" stroke="#8a4a3a" stroke-width="1.1" fill="none"/></svg>
<span class="t" id="t38" style="left:65.5px;top:482px;font-size:16px;letter-spacing:-0.376px;">src</span>
<svg style="position:absolute;left:27px;top:509.0px" width="10" height="12" viewBox="0 0 10 12"><path d="M3 2l4 4-4 4" fill="none" stroke="#959595" stroke-width="1.5"/></svg>
<svg style="position:absolute;left:44px;top:506px" width="16" height="16" viewBox="0 0 16 16"><rect x="1.5" y="3.2" width="6.5" height="2" fill="#2f72c0"/><rect x="2.2" y="5.6" width="7.5" height="3" fill="#3f9a78"/><rect x="2.2" y="6.6" width="7.5" height=".8" fill="#8fd0b0"/><rect x="1.2" y="9" width="9.8" height="4.4" fill="#c4713a"/><rect x="1.2" y="10.4" width="9.8" height="1" fill="#e9a77a"/><path d="M9.3 1.8l2.9-1 3.8 12-2.9 1z" fill="#eaa53c" stroke="#c07a1c" stroke-width=".5"/></svg>
<span class="t" id="t39" style="left:65.5px;top:505px;font-size:16px;letter-spacing:0.109px;">Server Runtime [Apache Tomcat v8.5]</span>
<svg style="position:absolute;left:27px;top:532.0px" width="10" height="12" viewBox="0 0 10 12"><path d="M3 2l4 4-4 4" fill="none" stroke="#959595" stroke-width="1.5"/></svg>
<svg style="position:absolute;left:44px;top:529px" width="16" height="16" viewBox="0 0 16 16"><rect x="1.5" y="3.2" width="6.5" height="2" fill="#2f72c0"/><rect x="2.2" y="5.6" width="7.5" height="3" fill="#3f9a78"/><rect x="2.2" y="6.6" width="7.5" height=".8" fill="#8fd0b0"/><rect x="1.2" y="9" width="9.8" height="4.4" fill="#c4713a"/><rect x="1.2" y="10.4" width="9.8" height="1" fill="#e9a77a"/><path d="M9.3 1.8l2.9-1 3.8 12-2.9 1z" fill="#eaa53c" stroke="#c07a1c" stroke-width=".5"/></svg>
<span class="t" id="t40" style="left:65.5px;top:528px;font-size:16px;letter-spacing:0.238px;">Web App Libraries</span>
<svg style="position:absolute;left:27px;top:555.0px" width="10" height="12" viewBox="0 0 10 12"><path d="M3 2l4 4-4 4" fill="none" stroke="#959595" stroke-width="1.5"/></svg>
<svg style="position:absolute;left:44px;top:552px" width="16" height="16" viewBox="0 0 16 16"><circle cx="4.2" cy="4" r="3.4" fill="#3f86d6" stroke="#2b5fa8" stroke-width=".6"/><path d="M1.8200000000000003 3.32q1.7 -3.06 3.4 -1.36q1.02 2.04 -0.68 3.06q-1.7 1.7 -2.72 -1.7z" fill="#7fd05a"/><circle cx="3.0100000000000002" cy="2.4699999999999998" r="1.19" fill="#d8efff" opacity=".8"/><rect x="3.5" y="6.5" width="12" height="8.5" fill="#fff" stroke="#3a4a8a" stroke-width="1"/><text x="4.6" y="13.6" font-family="Liberation Sans,sans-serif" font-size="6.5" font-weight="bold" fill="#111" letter-spacing="-.4">3.1</text></svg>
<span class="t" id="t41" style="left:65.5px;top:551px;font-size:16px;letter-spacing:0.210px;">Deployment Descriptor: zhucee</span>
<svg style="position:absolute;left:27px;top:578.0px" width="10" height="12" viewBox="0 0 10 12"><path d="M3 2l4 4-4 4" fill="none" stroke="#959595" stroke-width="1.5"/></svg>
<svg style="position:absolute;left:44px;top:575px" width="16" height="16" viewBox="0 0 16 16"><path d="M1.5 13.5V3.8q0-.8.8-.8h3.2l1.2 1.5h5.6q.8 0 .8.8v1.9" fill="#fdf0c8" stroke="#c58a2c" stroke-width="1.1" stroke-linejoin="round"/><path d="M1.5 13.6L4.3 7.3h11l-2.9 6.3z" fill="#fdecbd" stroke="#c58a2c" stroke-width="1.1" stroke-linejoin="round"/></svg>
<span class="t" id="t42" style="left:65.5px;top:574px;font-size:16px;letter-spacing:0.418px;">build</span>
<svg style="position:absolute;left:26px;top:601.5px" width="12" height="10" viewBox="0 0 12 10"><path d="M2 3l4 4 4-4" fill="none" stroke="#333" stroke-width="1.3"/></svg>
<svg style="position:absolute;left:44px;top:598px" width="16" height="16" viewBox="0 0 16 16"><path d="M1.5 13.5V3.8q0-.8.8-.8h3.2l1.2 1.5h5.6q.8 0 .8.8v1.9" fill="#fdf0c8" stroke="#c58a2c" stroke-width="1.1" stroke-linejoin="round"/><path d="M1.5 13.6L4.3 7.3h11l-2.9 6.3z" fill="#fdecbd" stroke="#c58a2c" stroke-width="1.1" stroke-linejoin="round"/></svg>
<span class="t" id="t43" style="left:65.5px;top:597px;font-size:16px;letter-spacing:0.384px;">WebContent</span>
<svg style="position:absolute;left:47px;top:624.0px" width="10" height="12" viewBox="0 0 10 12"><path d="M3 2l4 4-4 4" fill="none" stroke="#959595" stroke-width="1.5"/></svg>
<svg style="position:absolute;left:64px;top:621px" width="16" height="16" viewBox="0 0 16 16"><path d="M1.5 13.5V3.8q0-.8.8-.8h3.2l1.2 1.5h5.6q.8 0 .8.8v1.9" fill="#fdf0c8" stroke="#c58a2c" stroke-width="1.1" stroke-linejoin="round"/><path d="M1.5 13.6L4.3 7.3h11l-2.9 6.3z" fill="#fdecbd" stroke="#c58a2c" stroke-width="1.1" stroke-linejoin="round"/></svg>
<span class="t" id="t44" style="left:85.5px;top:620px;font-size:16px;letter-spacing:-0.232px;">META-INF</span>
<svg style="position:absolute;left:47px;top:647.0px" width="10" height="12" viewBox="0 0 10 12"><path d="M3 2l4 4-4 4" fill="none" stroke="#959595" stroke-width="1.5"/></svg>
<svg style="position:absolute;left:64px;top:644px" width="16" height="16" viewBox="0 0 16 16"><path d="M1.5 13.5V3.8q0-.8.8-.8h3.2l1.2 1.5h5.6q.8 0 .8.8v1.9" fill="#fdf0c8" stroke="#c58a2c" stroke-width="1.1" stroke-linejoin="round"/><path d="M1.5 13.6L4.3 7.3h11l-2.9 6.3z" fill="#fdecbd" stroke="#c58a2c" stroke-width="1.1" stroke-linejoin="round"/></svg>
<span class="t" id="t45" style="left:85.5px;top:643px;font-size:16px;letter-spacing:-0.878px;">WEB-INF</span>
<svg style="position:absolute;left:64px;top:667px" width="16" height="16" viewBox="0 0 16 16"><path d="M2.5 1.5h7.2l3.8 3.8v9.2h-11z" fill="#f1f4fb" stroke="#9a8248" stroke-width="1"/><path d="M9.6 1.6v3.8h3.8z" fill="#dcc890" stroke="#9a8248" stroke-width=".6"/><path d="M4.5 5.4h4" stroke="#f05858" stroke-width="1.2"/><path d="M4.5 7.6h4M9.7 7.6h1.100M7.6 9.700h3" stroke="#3a5aa0" stroke-width="1.1"/><path d="M4.500 9.700h2.200" stroke="#f05858" stroke-width="1.1"/><path d="M4.500 11.900h6" stroke="#3fa050" stroke-width="1.2"/></svg>
<span class="t" id="t46" style="left:85.5px;top:666px;font-size:16px;letter-spacing:0.235px;">denglu.jsp</span>
<svg style="position:absolute;left:64px;top:690px" width="16" height="16" viewBox="0 0 16 16"><path d="M2.5 1.5h7.2l3.8 3.8v9.2h-11z" fill="#f1f4fb" stroke="#9a8248" stroke-width="1"/><path d="M9.6 1.6v3.8h3.8z" fill="#dcc890" stroke="#9a8248" stroke-width=".6"/><path d="M4.5 5.4h4" stroke="#f05858" stroke-width="1.2"/><path d="M4.5 7.6h4M9.7 7.6h1.100M7.6 9.700h3" stroke="#3a5aa0" stroke-width="1.1"/><path d="M4.500 9.700h2.200" stroke="#f05858" stroke-width="1.1"/><path d="M4.500 11.900h6" stroke="#3fa050" stroke-width="1.2"/></svg>
<span class="t" id="t47" style="left:85.5px;top:689px;font-size:16px;letter-spacing:0.008px;">lianjie.jsp</span>
<svg style="position:absolute;left:7px;top:716.0px" width="10" height="12" viewBox="0 0 10 12"><path d="M3 2l4 4-4 4" fill="none" stroke="#959595" stroke-width="1.5"/></svg>
<svg style="position:absolute;left:24px;top:713px" width="16" height="16" viewBox="0 0 16 16"><text x="10.5" y="6.3" font-family="Liberation Sans,sans-serif" font-size="8" font-weight="bold" fill="#4468b0">J</text><path d="M2.5 13.5V4.8h3.2l1 1.2h4v2" fill="#fdf0c8" stroke="#b98a3a" stroke-width="1"/><path d="M2.5 13.6L5.5 8.3h10l-3 5.3z" fill="#a9cdf4" stroke="#3a55a5" stroke-width="1.1" stroke-linejoin="round"/><path d="M3.5 9.2L7 15.5H0z" fill="#f7c948" stroke="#b8860b" stroke-width=".8" stroke-linejoin="round"/><path d="M3.5 11.2v2.2M3.5 14.2v.7" stroke="#3a2a00" stroke-width="1"/></svg>
<span class="t" id="t48" style="left:45.5px;top:712px;font-size:16px;letter-spacing:-0.700px;">zy</span>
<span class="t" id="t49" style="left:204.5px;top:459px;font-size:16px;letter-spacing:-0.669px;color:#a68a4e">[JavaSE-17]</span>
<div style="position:absolute;left:1656px;top:295px;width:159px;height:23px;background:#d9d9d9;"></div>
<span class="t" id="t50" style="left:1639.3px;top:136px;font-size:16px;letter-spacing:0.255px;">jsp:directive.page</span>
<span class="t" id="t51" style="left:1773.7px;top:136px;font-size:16px;letter-spacing:0.568px;color:#a68a4e">import=java.sql.Driv</span>
<span class="t" id="t52" style="left:1639.3px;top:159px;font-size:16px;letter-spacing:0.255px;">jsp:directive.page</span>
<span class="t" id="t53" style="left:1773.7px;top:159px;font-size:16px;letter-spacing:0.392px;color:#a68a4e">import=java.sql.Con</span>
<span class="t" id="t54" style="left:1639.3px;top:182px;font-size:16px;letter-spacing:0.255px;">jsp:directive.page</span>
<span class="t" id="t55" style="left:1773.7px;top:182px;font-size:16px;letter-spacing:0.043px;color:#a68a4e">language=java</span>
<span class="t" id="t56" style="left:1639.3px;top:205px;font-size:16px;letter-spacing:-0.643px;">DOCTYPE:html</span>
<span class="t" id="t57" style="left:1639.3px;top:228px;font-size:16px;letter-spacing:0.566px;">html</span>
<span class="t" id="t58" style="left:1659.6px;top:251px;font-size:16px;letter-spacing:-0.223px;">head</span>
<span class="t" id="t59" style="left:1659.6px;top:274px;font-size:16px;letter-spacing:0.624px;">body</span>
<span class="t" id="t60" style="left:1679.8px;top:297px;font-size:16px;letter-spacing:0.104px;">jsp:scriptlet : try{...</span>
<svg style="position:absolute;left:1600px;top:232px" width="12" height="10" viewBox="0 0 12 10"><path d="M2 3l4 4 4-4" fill="none" stroke="#333" stroke-width="1.3"/></svg>
<svg style="position:absolute;left:1621px;top:254.5px" width="10" height="12" viewBox="0 0 10 12"><path d="M3 2l4 4-4 4" fill="none" stroke="#959595" stroke-width="1.5"/></svg>
<svg style="position:absolute;left:1620px;top:278px" width="12" height="10" viewBox="0 0 12 10"><path d="M2 3l4 4 4-4" fill="none" stroke="#333" stroke-width="1.3"/></svg>
<div style="position:absolute;left:505px;top:752px;width:335px;height:23px;background:#d9d9d9;"></div>
<svg style="position:absolute;left:489px;top:757.5px" width="10" height="12" viewBox="0 0 10 12"><path d="M3 2l4 4-4 4" fill="none" stroke="#959595" stroke-width="1.5"/></svg>
<span class="t" id="t61" style="left:528.7px;top:754px;font-size:16px;letter-spacing:0.183px;">Tomcat v8.5 Server at localhost  [Stopped]</span>
<span class="t" id="t62" style="left:24.3px;top:1006px;font-size:16px;letter-spacing:0.670px;">html/body/jsp:scriptlet/#text</span>
<span class="t" id="t63" style="left:1133.3px;top:1006px;font-size:16px;letter-spacing:0.389px;">Writable</span>
<span class="t" id="t64" style="left:1287.1px;top:1006px;font-size:16px;letter-spacing:-0.003px;">Smart Insert</span>
<span class="t" id="t65" style="left:1434.5px;top:1006px;font-size:16px;letter-spacing:-0.213px;">19 : 28 : 667</span>
<div style="position:absolute;left:1124px;top:1005px;width:1px;height:21px;background:#a0a0a0;"></div>
<div style="position:absolute;left:1279px;top:1005px;width:1px;height:21px;background:#a0a0a0;"></div>
<div style="position:absolute;left:1426px;top:1005px;width:1px;height:21px;background:#a0a0a0;"></div>
<div style="position:absolute;left:484px;top:112px;width:12px;height:585px;background:#f5f5f5;"></div>
<div style="position:absolute;left:523px;top:112px;width:1px;height:585px;background:#f0f0f0;"></div>
<div style="position:absolute;left:527px;top:472px;width:1028px;height:20px;background:#e8f2fe;"></div>
<div style="position:absolute;left:484px;top:332px;width:12px;height:280px;background:#88b9ee;background-image:repeating-conic-gradient(#1273de 0 25%,#fff 0 50%);background-size:2px 2px;border-top:1px solid #0f6ad6;box-sizing:border-box"></div>
<div style="position:absolute;left:1556px;top:112px;width:19px;height:585px;background:#f0f0f0;"></div>
<div style="position:absolute;left:1575px;top:112px;width:14px;height:604px;background:#f8f8f8;"></div>
<div style="position:absolute;left:484px;top:697px;width:1091px;height:19px;background:#f0f0f0;"></div>
<div style="position:absolute;left:545px;top:697px;width:966px;height:19px;background:#cdcdcd;"></div>
<div style="position:absolute;left:484px;top:697px;width:40px;height:19px;background:#fff;"></div>
<svg style="position:absolute;left:527px;top:699px" width="14" height="14" viewBox="0 0 14 14"><path d="M9 2.5L4.5 7 9 11.5" fill="none" stroke="#444" stroke-width="1.8"/></svg>
<svg style="position:absolute;left:1537px;top:699px" width="14" height="14" viewBox="0 0 14 14"><path d="M5 2.5L9.5 7 5 11.5" fill="none" stroke="#444" stroke-width="1.8"/></svg>
<svg style="position:absolute;left:1558.5px;top:115px" width="14" height="12" viewBox="0 0 14 12"><path d="M2.500 9.500L7 5l4.500 4.500" fill="none" stroke="#b8b8b8" stroke-width="1.900"/></svg>
<svg style="position:absolute;left:1558.5px;top:679px" width="14" height="12" viewBox="0 0 14 12"><path d="M2.500 3.500L7 8l4.500-4.500" fill="none" stroke="#b8b8b8" stroke-width="1.900"/></svg>
<div style="position:absolute;left:1595px;top:697px;width:325px;height:19px;background:#f0f0f0;"></div>
<div style="position:absolute;left:1616px;top:697px;width:225px;height:19px;background:#cdcdcd;"></div>
<svg style="position:absolute;left:1598px;top:699px" width="14" height="14" viewBox="0 0 14 14"><path d="M9 2.5L4.5 7 9 11.5" fill="none" stroke="#444" stroke-width="1.8"/></svg>
<svg style="position:absolute;left:1900px;top:699px" width="14" height="14" viewBox="0 0 14 14"><path d="M5 2.5L9.5 7 5 11.5" fill="none" stroke="#444" stroke-width="1.8"/></svg>
<div class="ln"><div>1</div><div>2</div><div>3</div><div>4</div><div>5</div><div>6</div><div>7</div><div>8</div><div>9</div><div>10</div><div>11</div><div>12</div><div>13</div><div>14</div><div>15</div><div>16</div><div>17</div><div>18</div><div>19</div><div>20</div><div>21</div><div>22</div><div>23</div><div>24</div><div>25</div><div>26</div><div>27</div><div>28</div></div>
<svg style="position:absolute;left:513px;top:216.5px" width="10" height="10" viewBox="0 0 10 10"><circle cx="5" cy="5" r="4" fill="#e0e6f0" stroke="#b4c0d2" stroke-width="0.9"/><path d="M2.600 5h4.800" stroke="#465064" stroke-width="1.100"/></svg>
<svg style="position:absolute;left:513px;top:236.5px" width="10" height="10" viewBox="0 0 10 10"><circle cx="5" cy="5" r="4" fill="#e0e6f0" stroke="#b4c0d2" stroke-width="0.9"/><path d="M2.600 5h4.800" stroke="#465064" stroke-width="1.100"/></svg>
<svg style="position:absolute;left:513px;top:316.5px" width="10" height="10" viewBox="0 0 10 10"><circle cx="5" cy="5" r="4" fill="#e0e6f0" stroke="#b4c0d2" stroke-width="0.9"/><path d="M2.600 5h4.800" stroke="#465064" stroke-width="1.100"/></svg>
<svg style="position:absolute;left:513px;top:336.5px" width="10" height="10" viewBox="0 0 10 10"><circle cx="5" cy="5" r="4" fill="#e0e6f0" stroke="#b4c0d2" stroke-width="0.9"/><path d="M2.600 5h4.800" stroke="#465064" stroke-width="1.100"/></svg>
<div style="position:absolute;left:524px;top:112px;width:1031px;height:585px;overflow:hidden"><div class="code" style="left:1.8px;top:2px"><div><span class="d">&lt;%@</span><span class="g">page</span> <span class="a">import</span>=<i>"java.sql.DriverManager"</i><span class="d">%&gt;</span></div><div><span class="d">&lt;%@</span><span class="g">page</span> <span class="a">import</span>=<i>"java.sql.Connection"</i><span class="d">%&gt;</span></div><div><span class="d">&lt;%@</span> <span class="g">page</span> <span class="a">language</span>=<i>"java"</i> <span class="a">contentType</span>=<i>"text/html; charset=UTF-8"</i></div><div>    <span class="a">pageEncoding</span>=<i>"UTF-8"</i><span class="d">%&gt;</span></div><div><span class="g">&lt;!DOCTYPE html&gt;</span></div><div><span class="g">&lt;html&gt;</span></div><div><span class="g">&lt;head&gt;</span></div><div><span class="g">&lt;meta</span> <span class="a">charset</span>=<i>"UTF-8"</i><span class="g">&gt;</span></div><div><span class="g">&lt;title&gt;</span><span class="z">连接成功</span><span class="g">&lt;/title&gt;</span></div><div><span class="g">&lt;/head&gt;</span></div><div><span class="g">&lt;body&gt;</span></div><div><span class="d">&lt;%</span></div><div>    <span class="k">try</span>{</div><div>        Class.forName(<span class="s">"com.mysql.cj.jdbc.Driver"</span>);              <span class="c">//<span class="z">显示声明将数据库驱动程序注册到</span>jdbc<span class="z">的驱动管理器中</span></span></div><div>        String url = <span class="s">"jdbc:mysql://localhost:3306/text"</span>;        <span class="c">//<span class="z">数据库名称为</span>test<span class="z">（需要提前在</span>MySQL<span class="z">里面建立</span>test<span class="z">数据库</span></span></div><div>        String username = <span class="s">"root"</span>;                                          <span class="c">//<span class="z">数据库用户名</span></span></div><div>        String password = <span class="s">"1234"</span>;                           <span class="c">//<span class="z">数据库密码</span></span></div><div>        Connection conn = DriverManager.getConnection(url,username,password);</div><div>        out.print(<span class="s">"<span class="z">数据库连接成功！</span>"</span>);</div><div>        conn.close();</div><div>    }</div><div>    <span class="k">catch</span>(Exception e){</div><div>        out.print(<span class="s">"<span class="z">数据库连接失败！</span>"</span>);</div><div>        out.print(<span class="s">"<span class="z">错误信息：</span>"</span>+e.toString());</div><div>    }</div><div><span class="d">%&gt;</span></div><div><span class="g">&lt;/body&gt;</span></div><div><span class="g">&lt;/html&gt;</span></div></div></div>
<div style="position:absolute;left:833px;top:472px;width:2px;height:20px;background:#000;"></div>
<svg style="position:absolute;left:309.5px;top:87.3px" width="16" height="16" viewBox="0 0 16 16"><rect x="1" y="1.5" width="10" height="9" fill="#fff" stroke="#7a9ad0" stroke-width="1"/><rect x="3.5" y="4" width="11" height="10" fill="#eef4fc" stroke="#5a82c8" stroke-width="1.1"/><path d="M6 9h6" stroke="#2a4a9a" stroke-width="1.5"/></svg>
<svg style="position:absolute;left:331.5px;top:86.8px" width="16" height="16" viewBox="0 0 16 16"><path d="M6 1.2L1.2 5 6 8.8V6.5h8.5v-3H6z" fill="#fbe39a" stroke="#c8861a" stroke-width="1.1" stroke-linejoin="round"/><path d="M10 7.2l4.8 3.8L10 14.8v-2.3H2v-3h8z" fill="#fbe39a" stroke="#c8861a" stroke-width="1.1" stroke-linejoin="round"/></svg>
<svg style="position:absolute;left:355px;top:87.3px" width="16" height="16" viewBox="0 0 16 16"><path d="M1.5 1.5h13L9.5 8v6.5l-3-1.5V8z" fill="#f4f8ff" stroke="#4a7ac8" stroke-width="1.1" stroke-linejoin="round"/></svg>
<div style="position:absolute;left:377px;top:86px;width:1px;height:18px;background:#8a8a8a;"></div>
<svg style="position:absolute;left:386.5px;top:87.5px" width="16" height="16" viewBox="0 0 16 16"><circle cx="5" cy="5.5" r="3" fill="#d0d0d0" stroke="#b4b4b4" stroke-width=".8"/><circle cx="11" cy="6.5" r="3" fill="#d8d8d8" stroke="#b4b4b4" stroke-width=".8"/><circle cx="7" cy="11" r="3.2" fill="#b8b8b8" stroke="#a8a8a8" stroke-width=".8"/></svg>
<svg style="position:absolute;left:409.3px;top:87.5px" width="16" height="16" viewBox="0 0 16 16"><circle cx="8" cy="2.8" r="1.8" fill="#fff" stroke="#555" stroke-width=".9"/><circle cx="8" cy="7.7" r="1.8" fill="#fff" stroke="#555" stroke-width=".9"/><circle cx="8" cy="12.6" r="1.8" fill="#fff" stroke="#555" stroke-width=".9"/></svg>
<svg style="position:absolute;left:435px;top:90px" width="11" height="5" viewBox="0 0 11 5"><rect x=".7" y=".7" width="8.8" height="3" fill="#fff" stroke="#111" stroke-width="1.3"/></svg>
<svg style="position:absolute;left:457.5px;top:90px" width="11" height="11" viewBox="0 0 11 11"><rect x=".7" y=".7" width="8.8" height="8.800" fill="#fff" stroke="#111" stroke-width="1.3"/><path d="M.7 2.500h8.800" stroke="#111" stroke-width="1.2"/></svg>
<svg style="position:absolute;left:1545.5px;top:90px" width="11" height="5" viewBox="0 0 11 5"><rect x=".7" y=".7" width="8.8" height="3" fill="#fff" stroke="#111" stroke-width="1.3"/></svg>
<svg style="position:absolute;left:1568.5px;top:90px" width="11" height="11" viewBox="0 0 11 11"><rect x=".7" y=".7" width="8.8" height="8.800" fill="#fff" stroke="#111" stroke-width="1.3"/><path d="M.7 2.500h8.800" stroke="#111" stroke-width="1.2"/></svg>
<svg style="position:absolute;left:1875.5px;top:90px" width="11" height="5" viewBox="0 0 11 5"><rect x=".7" y=".7" width="8.8" height="3" fill="#fff" stroke="#111" stroke-width="1.3"/></svg>
<svg style="position:absolute;left:1899px;top:90px" width="11" height="11" viewBox="0 0 11 11"><rect x=".7" y=".7" width="8.8" height="8.800" fill="#fff" stroke="#111" stroke-width="1.3"/><path d="M.7 2.500h8.800" stroke="#111" stroke-width="1.2"/></svg>
<svg style="position:absolute;left:1875.5px;top:730px" width="11" height="5" viewBox="0 0 11 5"><rect x=".7" y=".7" width="8.8" height="3" fill="#fff" stroke="#111" stroke-width="1.3"/></svg>
<svg style="position:absolute;left:1898.5px;top:730px" width="11" height="11" viewBox="0 0 11 11"><rect x=".7" y=".7" width="8.8" height="8.800" fill="#fff" stroke="#111" stroke-width="1.3"/><path d="M.7 2.500h8.800" stroke="#111" stroke-width="1.2"/></svg>
<div style="position:absolute;left:1819px;top:112px;width:101px;height:22px;background:#e6e6e6;"></div>
<div style="position:absolute;left:1819px;top:112px;width:23px;height:21px;background:#c0daf2;box-sizing:border-box;border:1px solid #8ec6f4"></div>
<svg style="position:absolute;left:1822px;top:114.5px" width="16" height="16" viewBox="0 0 16 16"><path d="M3.2 2.700v11" stroke="#3a78b0" stroke-width="1.100" fill="none"/><path d="M1 11.500h4.400L3.200 14.800z" fill="#3a5a7a"/><text x="5.500" y="8.400" font-family="Liberation Serif,serif" font-size="12" font-weight="bold" fill="#128a68">a</text><text x="10" y="16.300" font-family="Liberation Serif,serif" font-size="12" font-weight="bold" fill="#9a2a8a">z</text></svg>
<div style="position:absolute;left:1844px;top:114px;width:1px;height:18px;background:#8a8a8a;"></div>
<svg style="position:absolute;left:1853.5px;top:115.5px" width="16" height="16" viewBox="0 0 16 16"><circle cx="5" cy="5.5" r="3" fill="#d0d0d0" stroke="#b4b4b4" stroke-width=".8"/><circle cx="11" cy="6.5" r="3" fill="#d8d8d8" stroke="#b4b4b4" stroke-width=".8"/><circle cx="7" cy="11" r="3.2" fill="#b8b8b8" stroke="#a8a8a8" stroke-width=".8"/></svg>
<svg style="position:absolute;left:1877px;top:115.7px" width="16" height="16" viewBox="0 0 16 16"><rect x="1" y="1.5" width="10" height="9" fill="#fff" stroke="#7a9ad0" stroke-width="1"/><rect x="3.5" y="4" width="11" height="10" fill="#eef4fc" stroke="#5a82c8" stroke-width="1.1"/><path d="M6 9h6" stroke="#2a4a9a" stroke-width="1.5"/></svg>
<svg style="position:absolute;left:1899.3px;top:115.5px" width="16" height="16" viewBox="0 0 16 16"><circle cx="8" cy="2.8" r="1.8" fill="#fff" stroke="#555" stroke-width=".9"/><circle cx="8" cy="7.7" r="1.8" fill="#fff" stroke="#555" stroke-width=".9"/><circle cx="8" cy="12.6" r="1.8" fill="#fff" stroke="#555" stroke-width=".9"/></svg>
<svg style="position:absolute;left:1713px;top:726.8px" width="16" height="16" viewBox="0 0 16 16"><rect x="1" y="1.5" width="10" height="9" fill="#fff" stroke="#7a9ad0" stroke-width="1"/><rect x="3.5" y="4" width="11" height="10" fill="#eef4fc" stroke="#5a82c8" stroke-width="1.1"/><path d="M6 9h6" stroke="#2a4a9a" stroke-width="1.5"/></svg>
<svg style="position:absolute;left:1735px;top:726.5px" width="16" height="16" viewBox="0 0 16 16"><ellipse cx="8" cy="9" rx="3.2" ry="4.4" fill="#8ac070" stroke="#1a6a5a" stroke-width="1.2"/><circle cx="8" cy="3.8" r="1.6" fill="#1a6a5a"/><path d="M5 6.5L1.5 4M11 6.5L14.5 4M4.8 9H1M11.2 9H15M5.2 11.8L2 15M10.8 11.8L14 15" stroke="#1a6a5a" stroke-width="1.1"/><path d="M6.5 7.5l3 3.5" stroke="#d8f0c8" stroke-width="1"/></svg>
<svg style="position:absolute;left:1758px;top:726.5px" width="16" height="16" viewBox="0 0 16 16"><circle cx="8" cy="8" r="7" fill="#3aa040" stroke="#1a7028" stroke-width="1"/><circle cx="8" cy="8" r="5.6" fill="none" stroke="#7ad07a" stroke-width=".9" opacity=".8"/><path d="M6 4.2L11.8 8 6 11.8z" fill="#fff"/></svg>
<svg style="position:absolute;left:1781.5px;top:726px" width="16" height="16" viewBox="0 0 16 16"><circle cx="9" cy="7" r="4" fill="#eef4fc" stroke="#2a5ab0" stroke-width="1.2"/><path d="M9 4.5V7l1.8 1M8 1.5h2M9 1.5V3" stroke="#2a5ab0" stroke-width="1" fill="none"/><path d="M12 2.5h4M12.5 4.5h3.5M13.5 6.5h2.5" stroke="#6a8ad0" stroke-width=".8"/><path d="M1.5 9l6 3.2-6 3.3z" fill="#30a848" stroke="#1a7a30" stroke-width=".6"/></svg>
<svg style="position:absolute;left:1804.5px;top:727.5px" width="16" height="16" viewBox="0 0 16 16"><rect x="2" y="2" width="12" height="12" rx="1" fill="#eadfe2" stroke="#d8c8cc" stroke-width="1"/><rect x="4" y="4" width="8" height="8" fill="#d4a8b0"/></svg>
<svg style="position:absolute;left:1827.5px;top:726px" width="16" height="16" viewBox="0 0 16 16"><rect x="1.5" y="3" width="7" height="11.5" fill="#f0f4e8" stroke="#5a7a3a" stroke-width="1"/><rect x="3" y="4.5" width="4" height="2" fill="#48a848"/><path d="M3 9h4M3 11h4" stroke="#9a9a9a" stroke-width=".8"/><rect x="2" y="12.5" width="5" height="3" fill="#8aa8e0"/><rect x="7.5" y="1" width="5.5" height="7" fill="#fff" stroke="#3a8a3a" stroke-width=".9"/><rect x="9.8" y="3" width="5.5" height="7" fill="#fffbe8" stroke="#3a8a3a" stroke-width=".9"/><path d="M11 5h3M11 6.8h3M11 8.5h3" stroke="#c8a040" stroke-width=".7"/></svg>
<svg style="position:absolute;left:1850.2px;top:727.5px" width="16" height="16" viewBox="0 0 16 16"><circle cx="8" cy="2.8" r="1.8" fill="#fff" stroke="#555" stroke-width=".9"/><circle cx="8" cy="7.7" r="1.8" fill="#fff" stroke="#555" stroke-width=".9"/><circle cx="8" cy="12.6" r="1.8" fill="#fff" stroke="#555" stroke-width=".9"/></svg>
<svg style="position:absolute;left:4.5px;top:89.5px" width="16" height="16" viewBox="0 0 16 16"><path d="M1.5 1h6l2.5 2.5V11h-8.5z" fill="#fff" stroke="#a09070" stroke-width=".9"/><path d="M3 4h4M3 6h4M3 8h3" stroke="#7a9ad8" stroke-width=".9"/><path d="M5.5 14.5V7.5h3.5l1 1.3h5v5.7z" fill="#fbd26a" stroke="#c98a20" stroke-width="1"/></svg>
<svg style="position:absolute;left:488.3px;top:89.6px" width="16" height="16" viewBox="0 0 16 16"><path d="M2.5 1.5h7.2l3.8 3.8v9.2h-11z" fill="#f1f4fb" stroke="#9a8248" stroke-width="1"/><path d="M9.6 1.6v3.8h3.8z" fill="#dcc890" stroke="#9a8248" stroke-width=".6"/><path d="M4.5 5.4h4" stroke="#f05858" stroke-width="1.2"/><path d="M4.5 7.6h4M9.7 7.6h1.100M7.6 9.700h3" stroke="#3a5aa0" stroke-width="1.1"/><path d="M4.500 9.700h2.200" stroke="#f05858" stroke-width="1.1"/><path d="M4.500 11.900h6" stroke="#3fa050" stroke-width="1.2"/></svg>
<svg style="position:absolute;left:604.7px;top:89.6px" width="16" height="16" viewBox="0 0 16 16"><path d="M2.5 1.5h7.2l3.8 3.8v9.2h-11z" fill="#f1f4fb" stroke="#9a8248" stroke-width="1"/><path d="M9.6 1.6v3.8h3.8z" fill="#dcc890" stroke="#9a8248" stroke-width=".6"/><path d="M4.5 5.4h4" stroke="#f05858" stroke-width="1.2"/><path d="M4.5 7.6h4M9.7 7.6h1.100M7.6 9.700h3" stroke="#3a5aa0" stroke-width="1.1"/><path d="M4.500 9.700h2.200" stroke="#f05858" stroke-width="1.1"/><path d="M4.500 11.900h6" stroke="#3fa050" stroke-width="1.2"/></svg>
<svg style="position:absolute;left:1598.5px;top:90px" width="16" height="16" viewBox="0 0 16 16"><rect x="1.500" y="1.500" width="5" height="5" fill="#dcecfc" stroke="#2a6ab8" stroke-width="1.200"/><rect x="1.500" y="10.500" width="5" height="5" fill="#dcecfc" stroke="#2a6ab8" stroke-width="1.200"/><path d="M8.500 4.500h6M8.500 13.500h6M12 8.800h2.500" stroke="#2a78c8" stroke-width="1.200"/><rect x="8.900" y="7.400" width="2.400" height="2.600" fill="#fff" stroke="#2a6ab8" stroke-width=".9"/></svg>
<svg style="position:absolute;left:1701.5px;top:90px" width="16" height="16" viewBox="0 0 16 16"><path d="M3 1.500h10v13.500q-1.500-1.300-3.300-.300-1.700 1-3.400 0-1.600-1-3.300.300z" fill="#f4f4fa" stroke="#55556a" stroke-width="1"/><path d="M3.500 11h9v3.500q-1.500-1-3 0t-3 0-3 0z" fill="#b8b8e0"/><path d="M5 4.500h6M5 6.500h6M5 8.500h6M5 10.500h6" stroke="#555" stroke-width="1" shape-rendering="crispEdges"/></svg>
<svg style="position:absolute;left:487px;top:730px" width="16" height="16" viewBox="0 0 16 16"><rect x="1.5" y="1.5" width="13" height="13" fill="#f4ead0" stroke="#8a7a60" stroke-width="1"/><path d="M2 2h4v12H2z" fill="#c8b898"/><circle cx="8.5" cy="5.5" r="2.6" fill="#e03a3a"/><path d="M4.5 14.5l3-5h2.5l3 5z" fill="#e03a3a"/><rect x="10.5" y="8" width="3.5" height="5.5" fill="#fff" stroke="#8a8a8a" stroke-width=".6"/></svg>
<svg style="position:absolute;left:576.5px;top:730px" width="16" height="16" viewBox="0 0 16 16"><rect x="1.5" y="2.5" width="13" height="11" fill="#fff" stroke="#5a5a6a" stroke-width="1"/><path d="M1.5 5.5h13" stroke="#5a5a6a" stroke-width="1"/><rect x="2" y="3" width="12" height="2.2" fill="#c8d4ec"/><path d="M5.5 5.5v8M2 8h12M2 10.7h12" stroke="#b0b8c8" stroke-width=".8"/></svg>
<svg style="position:absolute;left:681.5px;top:730px" width="16" height="16" viewBox="0 0 16 16"><path d="M3.5 2v12M8 2v12M12.5 2v12" stroke="#6a6a6a" stroke-width="1"/><rect x="1.8" y="8" width="3.4" height="3.4" fill="#f0c040" stroke="#a07820" stroke-width=".7"/><rect x="6.3" y="3.5" width="3.4" height="3.4" fill="#60a8e8" stroke="#2a68a8" stroke-width=".7"/><rect x="10.8" y="9" width="3.4" height="3.4" fill="#60c060" stroke="#2a8a3a" stroke-width=".7"/></svg>
<svg style="position:absolute;left:783.7px;top:730px" width="16" height="16" viewBox="0 0 16 16"><path d="M1 3l4-1.5 5 1.5 5-1.5V13l-5 1.5L5 13 1 14.5z" fill="#6ab04a" stroke="#3a7a2a" stroke-width="1"/><path d="M5 1.5V13M10 3v11.5" stroke="#3a7a2a" stroke-width=".8"/><path d="M2 6l3 1 2-2 3 3 4-2" stroke="#f0e8a0" stroke-width="1" fill="none"/><rect x="9.5" y="8.5" width="5.5" height="6" fill="#f4ead0" stroke="#8a6a3a" stroke-width=".8"/></svg>
<svg style="position:absolute;left:965.5px;top:730px" width="16" height="16" viewBox="0 0 16 16"><path d="M3 2.5h7l3 3v9H3z" fill="#fff" stroke="#5a6a9a" stroke-width="1"/><path d="M1.5 1.5h5v3h-5z" fill="#4a78c8"/><path d="M5 7.5h1.5M5 10h1.5M5 12.5h1.5" stroke="#c84848" stroke-width="1.1"/><path d="M7.5 7.5h4M7.5 10h4M7.5 12.5h4" stroke="#6a8ac8" stroke-width="1"/></svg>
<svg style="position:absolute;left:1060px;top:730px" width="16" height="16" viewBox="0 0 16 16"><rect x="1.5" y="2" width="13" height="9.5" rx="1" fill="#e8f0fc" stroke="#2a58b0" stroke-width="1.6"/><path d="M4 5h6M4 7.5h4" stroke="#2a58b0" stroke-width="1.1"/><path d="M4 14h8" stroke="#2a58b0" stroke-width="1.8"/><path d="M8 11.5V14" stroke="#2a58b0" stroke-width="2"/></svg>
<svg style="position:absolute;left:508.5px;top:755px" width="16" height="16" viewBox="0 0 16 16"><rect x="2.5" y="1.5" width="8" height="11" fill="#f4f4ec" stroke="#6a7a6a" stroke-width="1"/><rect x="4" y="3" width="5" height="2" fill="#48a848"/><path d="M4 7h5M4 9h5" stroke="#9a9a9a" stroke-width=".9"/><rect x="8" y="9" width="7" height="6" rx="1" fill="#3a68c0" stroke="#1a3a8a" stroke-width=".8"/><rect x="9.8" y="10.8" width="3.4" height="2.4" fill="#cfe0ff"/></svg>
<svg style="position:absolute;left:3.5px;top:1007.3px" width="16" height="16" viewBox="0 0 16 16"><path d="M2.5 1.5h7.500l3.500 3.500v9.500h-11z" fill="#f6f8fd" stroke="#9a8858" stroke-width="1"/><path d="M10 1.500v3.500h3.500z" fill="#e0d0a0" stroke="#9a8858" stroke-width=".7"/><path d="M4.5 5.5h5M4.5 7.5h7M4.5 9.5h7M4.5 11.5h7" stroke="#5a78c8" stroke-width=".9"/></svg>
<svg style="position:absolute;left:1617.5px;top:137px" width="16" height="16" viewBox="0 0 16 16"><path d="M5 4.5L1.8 8 5 11.5M11 4.5L14.2 8 11 11.5" fill="none" stroke="#3a78c8" stroke-width="1.3"/></svg>
<svg style="position:absolute;left:1617.5px;top:160px" width="16" height="16" viewBox="0 0 16 16"><path d="M5 4.5L1.8 8 5 11.5M11 4.5L14.2 8 11 11.5" fill="none" stroke="#3a78c8" stroke-width="1.3"/></svg>
<svg style="position:absolute;left:1617.5px;top:183px" width="16" height="16" viewBox="0 0 16 16"><path d="M5 4.5L1.8 8 5 11.5M11 4.5L14.2 8 11 11.5" fill="none" stroke="#3a78c8" stroke-width="1.3"/></svg>
<svg style="position:absolute;left:1617.5px;top:206px" width="16" height="16" viewBox="0 0 16 16"><path d="M2 1.5h9v5M2 1.5v12h7" fill="#fff" stroke="#8a7a50" stroke-width="1"/><path d="M2.5 2h8.3v11H2.5z" fill="#fffdf2"/><path d="M2 1.5h9.3v12H2z" fill="none" stroke="#8a7a50" stroke-width="1"/><path d="M14.5 2.5L8 10" stroke="#c86a28" stroke-width="2.2"/><path d="M8.5 9.2L5 13.8l5-2.6z" fill="#7a5230"/><path d="M4 12.5l4.5 2" stroke="#a06a30" stroke-width="1.6"/></svg>
<svg style="position:absolute;left:1618px;top:229px" width="16" height="16" viewBox="0 0 16 16"><path d="M3 1.5h6.5l3.5 3.5v9.5H3z" fill="#fffdf2" stroke="#8a7a50" stroke-width="1"/><path d="M9.5 1.5v3.5h3.5" fill="none" stroke="#8a7a50" stroke-width=".8"/><path d="M7 6.5L4.5 9 7 11.5M9 6.5L11.5 9 9 11.5" fill="none" stroke="#2a68c0" stroke-width="1.2"/></svg>
<svg style="position:absolute;left:1637.5px;top:252px" width="16" height="16" viewBox="0 0 16 16"><path d="M5 4.5L1.8 8 5 11.5M11 4.5L14.2 8 11 11.5" fill="none" stroke="#3a78c8" stroke-width="1.3"/></svg>
<svg style="position:absolute;left:1638.5px;top:275px" width="16" height="16" viewBox="0 0 16 16"><path d="M3.5 1.5h9v10l-3 3h-6z" fill="#fff6b8" stroke="#8a7a50" stroke-width="1"/><path d="M3.5 1.5h9v2.2h-9z" fill="#f0d860" stroke="#8a7a50" stroke-width=".8"/><path d="M12.5 11.5h-3v3" fill="#e8dca0" stroke="#8a7a50" stroke-width=".8"/></svg>
<svg style="position:absolute;left:1657.5px;top:298px" width="16" height="16" viewBox="0 0 16 16"><path d="M5 4.5L1.8 8 5 11.5M11 4.5L14.2 8 11 11.5" fill="none" stroke="#3a78c8" stroke-width="1.3"/></svg>
<div style="position:absolute;left:1571px;top:1008px;width:2px;height:16px;background:transparent;background-image:linear-gradient(#b4b4b4 50%,transparent 50%);background-size:2px 4px"></div>
<div style="position:absolute;left:1728px;top:998px;width:191px;height:31px;background:#fff;box-sizing:border-box;border:1px solid #a9c3e6;border-radius:2px"></div>
<div style="position:absolute;left:1702px;top:996px;width:33px;height:40px;background:linear-gradient(#f4703a,#e8420c);border-radius:5px;transform:rotate(-16deg)"></div>
<span style="position:absolute;left:1701px;top:993px;width:36px;text-align:center;font:italic bold 30px/40px 'Liberation Sans',sans-serif;color:#fff;transform:rotate(-10deg) scaleX(1.45)">S</span>
<span style="position:absolute;left:1745px;top:1002px;font:500 19px/24px 'Noto Sans CJK SC','Liberation Sans',sans-serif;color:#1a6cd6">中</span>
<svg style="position:absolute;left:1776px;top:1004px" width="18" height="20" viewBox="0 0 18 20"><circle cx="5" cy="7.200" r="2" fill="none" stroke="#1a6cd6" stroke-width="1.6"/><path d="M12.5 10.5q2.2 0 2.2 2.2 0 2.6-3.2 4.2l-.5-.9q1.8-1 1.8-2.4-1.5-.1-1.5-1.6 0-1.5 1.2-1.5z" fill="#1a6cd6"/></svg>
<svg style="position:absolute;left:1805px;top:1003px" width="20" height="22" viewBox="0 0 20 22"><rect x="6.3" y="1" width="7.4" height="12" rx="3.7" fill="#1a6cd6"/><path d="M3 9.5q0 6.5 7 6.5t7-6.5" fill="none" stroke="#1a6cd6" stroke-width="1.6"/><path d="M7.5 20h5" stroke="#1a6cd6" stroke-width="1.8" stroke-linecap="round"/></svg>
<svg style="position:absolute;left:1835px;top:1006px" width="20" height="17" viewBox="0 0 20 17"><rect x="1" y="1" width="18" height="15" rx="2" fill="#1a6cd6"/><path d="M3.5 4h2.6v2.4H3.5zM7.3 4h2.6v2.4H7.3zM11.1 4h2.6v2.4h-2.6zM14.9 4h2v2.4h-2zM3.5 7.6h2.6V10H3.5zM7.3 7.6h2.6V10H7.3zM11.1 7.6h2.6V10h-2.6zM14.9 7.6h2V10h-2zM3.5 11.3h13.4v2.3H3.5z" fill="#fff"/></svg>
<svg style="position:absolute;left:1865px;top:1005px" width="20" height="19" viewBox="0 0 20 19"><path d="M6.5 1q3.5 2.6 7 0l5.5 2.6-1.6 4.6-2.9-.9V18h-9V7.3l-2.9.9L1 3.600z" fill="#1a6cd6"/></svg>
<svg style="position:absolute;left:1895px;top:1005px" width="19" height="19" viewBox="0 0 19 19"><defs><linearGradient id="pg" x1="0" y1="0" x2="1" y2="1"><stop offset="0" stop-color="#a070f0"/><stop offset=".6" stop-color="#e080b0"/><stop offset="1" stop-color="#ff9050"/></linearGradient></defs><g fill="url(#pg)"><path d="M1 5a4 4 0 018 0v4H5a4 4 0 01-4-4z"/><path d="M10.5 9V5a4 4 0 114 4z"/><path d="M9 10.5v4a4 4 0 11-4-4z"/><path d="M10.500 10.500h4a4 4 0 11-4 4z"/></g><circle cx="14.500" cy="5" r="1.600" fill="#fff"/></svg>
<div style="position:absolute;left:1919px;top:82px;width:1px;height:921px;background:#f0f0f0;"></div>
</body></html>
